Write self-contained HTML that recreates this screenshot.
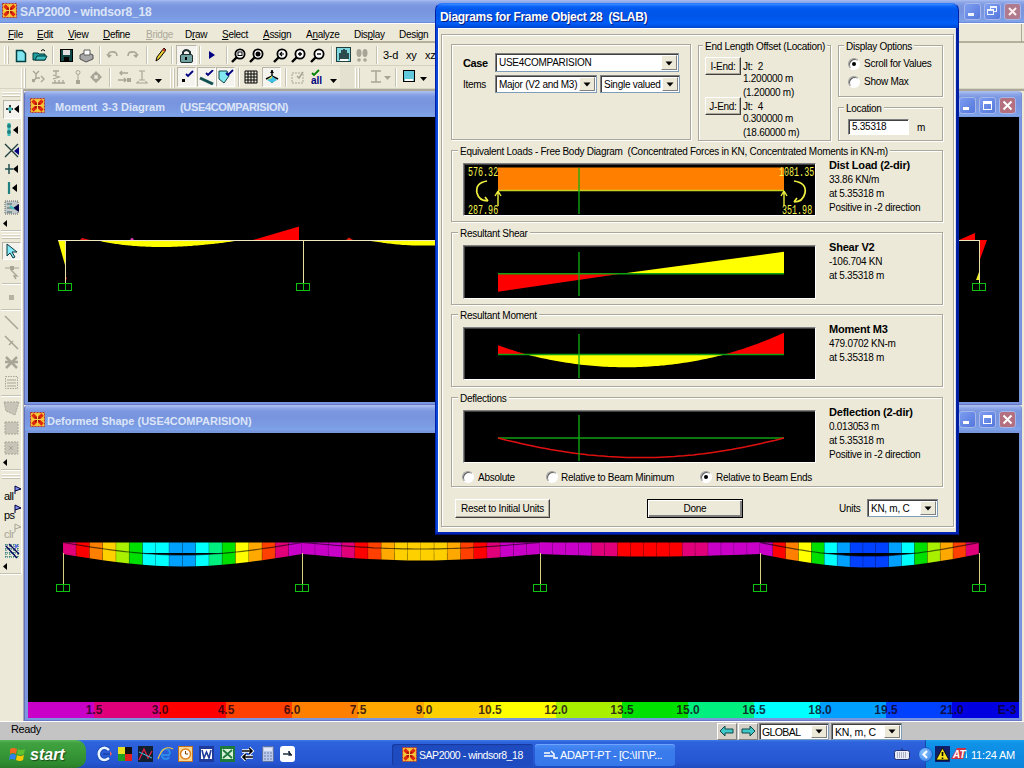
<!DOCTYPE html>
<html><head><meta charset="utf-8"><title>SAP2000</title>
<style>
*{margin:0;padding:0;box-sizing:border-box}
html,body{width:1024px;height:768px;overflow:hidden;background:#ECE9D8;font-family:"Liberation Sans",sans-serif;font-size:11px;color:#000;position:relative}
.a{position:absolute}
.t{position:absolute;white-space:nowrap;line-height:1}
.ttl{background:linear-gradient(#A8BCF0 0,#8EA8E8 2px,#7C98E0 5px,#7894DE 45%,#7B9CE4 80%,#7FA4EA 95%,#7494DC 100%)}
.menu span{position:absolute;white-space:nowrap;line-height:1;font-size:10px;letter-spacing:-0.3px}
.u{text-decoration:underline}
.btn3{position:absolute;border-radius:3px;border:1px solid #A7B7EA}
.grp{border:1px solid #ACA899;box-shadow:inset 1px 1px 0 #fff,1px 1px 0 #fff}
.cmb{background:#fff;border:1px solid #7F9DB9;border-top-color:#808080;border-left-color:#808080;box-shadow:inset 1px 1px 0 #404040}
.cbtn{background:#ECE9D8;border:1px solid #fff;border-right-color:#808080;border-bottom-color:#808080}
.pbtn{background:#ECE9D8;border:1px solid #fff;border-right-color:#404040;border-bottom-color:#404040;box-shadow:inset -1px -1px 0 #ACA899}
.pbtn.def{border:1px solid #000;box-shadow:inset 1px 1px 0 #fff,inset -2px -2px 0 #808080}
.rad{border-radius:50%;background:#fff;border:1px solid #A0A0A0;border-bottom-color:#fff;border-right-color:#fff;box-shadow:inset 1px 1px 0 #606060}
.cnv{background:#000;border:1px solid #808080;border-right-color:#fff;border-bottom-color:#fff;box-shadow:inset 1px 1px 0 #404040;overflow:hidden}
.edit{background:#fff;border:1px solid #808080;border-right-color:#fff;border-bottom-color:#fff;box-shadow:inset 1px 1px 0 #404040}
.dttl{background:linear-gradient(#3D8BFF 0,#1068F8 2px,#0058EE 5px,#0055E8 50%,#005EF8 80%,#0046D0 100%)}
.sbtn{background:#D4D0C8;border:1px solid #fff;border-right-color:#808080;border-bottom-color:#808080}

</style></head><body>
<!-- main title bar -->
<div class="a ttl" style="left:0;top:0;width:1024px;height:23px"></div>
<div class="a" style="left:0;top:22px;width:1024px;height:1px;background:#6C8AD8"></div>
<svg class="a" style="left:2px;top:3px" width="15" height="15"><rect x="0.5" y="0.5" width="14" height="14" fill="#F4C030" stroke="#B03040" stroke-dasharray="2 1"/><path d="M2.5 2.5L12.5 12.5M12.5 2.5L2.5 12.5" stroke="#E02810" stroke-width="3.2"/><path d="M5 5L10 10M10 5L5 10" stroke="#A01808" stroke-width="1.3"/><path d="M2 7.5H13M7.5 2V13" stroke="#F8D050" stroke-width="1"/></svg>
<div class="t" style="left:20px;top:6px;font-size:12px;font-weight:bold;letter-spacing:-0.15px;color:#DCE5F8">SAP2000 - windsor8_18</div>
<div class="btn3" style="left:964px;top:3px;width:17px;height:17px;background:linear-gradient(135deg,#7FA0F0,#5577DD)"></div>
<div class="a" style="left:968px;top:13px;width:6px;height:3px;background:#F0F4FF"></div>
<div class="btn3" style="left:984px;top:3px;width:17px;height:17px;background:linear-gradient(135deg,#7FA0F0,#5577DD)"></div>
<div class="a" style="left:990px;top:6px;width:7px;height:6px;border:1px solid #F0F4FF;border-top-width:2px"></div>
<div class="a" style="left:987px;top:9px;width:7px;height:6px;border:1px solid #F0F4FF;border-top-width:2px;background:#6688E0"></div>
<div class="btn3" style="left:1004px;top:3px;width:17px;height:17px;background:#B07A8E"></div>
<svg class="a" style="left:1004px;top:3px" width="17" height="17"><path d="M5 5L12 12M12 5L5 12" stroke="#FFF0F0" stroke-width="2"/></svg>
<div class="a" style="left:1021px;top:23px;width:3px;height:700px;background:#ECE9D8"></div>
<!-- menu -->
<div class="a menu" style="left:0;top:23px;width:1024px;height:20px;background:#ECE9D8;border-top:1px solid #FFFFFF;border-bottom:2px solid #B4B09C">
<span style="left:8px;top:6px"><u>F</u>ile</span>
<span style="left:37px;top:6px"><u>E</u>dit</span>
<span style="left:68px;top:6px"><u>V</u>iew</span>
<span style="left:103px;top:6px"><u>D</u>efine</span>
<span style="left:146px;top:6px;color:#ACA899"><u>B</u>ridge</span>
<span style="left:185px;top:6px">D<u>r</u>aw</span>
<span style="left:222px;top:6px"><u>S</u>elect</span>
<span style="left:263px;top:6px"><u>A</u>ssign</span>
<span style="left:306px;top:6px">A<u>n</u>alyze</span>
<span style="left:354px;top:6px">Dis<u>p</u>lay</span>
<span style="left:399px;top:6px">Desi<u>g</u>n</span>
</div>
<div class="a" style="left:0;top:43px;width:1024px;height:46px;background:#ECE9D8"></div><div class="a" style="left:0;top:65px;width:440px;height:1px;background:#D6D2C2"></div><div class="a" style="left:1021px;top:24px;width:1px;height:19px;background:#ACA899"></div><div class="a" style="left:0;top:88px;width:1024px;height:1px;background:#D8D4C4"></div><div class="a" style="left:23px;top:89px;width:1001px;height:2px;background:#ACA899"></div><div class="a" style="left:4px;top:46px;width:5px;height:18px;border-left:1px solid #fff;border-right:1px solid #C5C2B2;box-shadow:inset 1px 0 0 #D8D4C4,inset -1px 0 0 #fff"></div><svg class="a" style="left:15px;top:49px" width="12" height="14"><path d="M1.5 1.5H7.5L10.5 4.5V12.5H1.5Z" fill="#7FE6F0" stroke="#004040" stroke-width="1.5"/></svg><svg class="a" style="left:32px;top:48px" width="16" height="14"><path d="M1 5H6L7 6H13V12H1Z" fill="#1E9E9E" stroke="#003838"/><path d="M3 12L5 8H15L13 12Z" fill="#40C0C0" stroke="#003838"/><path d="M9 3Q11 0 13 3" fill="none" stroke="#000"/></svg><div class="a" style="left:52px;top:46px;width:2px;height:18px;border-left:1px solid #C5C2B2;border-right:1px solid #fff"></div><svg class="a" style="left:60px;top:49px" width="13" height="13"><rect x="0.5" y="0.5" width="12" height="12" fill="#104848" stroke="#000"/><rect x="3" y="1" width="7" height="5" fill="#E0E0E0"/><rect x="4" y="8" width="5" height="4" fill="#000"/></svg><svg class="a" style="left:78px;top:48px" width="16" height="15"><path d="M2 7L8 4L15 7L15 11L8 14L2 11Z" fill="#A8A8A8" stroke="#505050"/><path d="M6 2H12V7H6Z" fill="#fff" stroke="#606060"/></svg><div class="a" style="left:99px;top:46px;width:2px;height:18px;border-left:1px solid #C5C2B2;border-right:1px solid #fff"></div><svg class="a" style="left:106px;top:50px" width="13" height="10"><path d="M3 7Q1 3 5 2Q11 1 11 6" fill="none" stroke="#A8A597" stroke-width="1.6"/><path d="M0 4L3 8L6 5Z" fill="#A8A597"/></svg><svg class="a" style="left:126px;top:50px" width="13" height="10"><path d="M10 7Q12 3 8 2Q2 1 2 6" fill="none" stroke="#A8A597" stroke-width="1.6"/><path d="M13 4L10 8L7 5Z" fill="#A8A597"/></svg><div class="a" style="left:146px;top:46px;width:2px;height:18px;border-left:1px solid #C5C2B2;border-right:1px solid #fff"></div><svg class="a" style="left:154px;top:47px" width="12" height="15"><path d="M2 14L3 10L10 1L12 3L5 12Z" fill="#F0D030" stroke="#000"/><path d="M9 2L11 4" stroke="#C03030" stroke-width="2"/></svg><div class="a" style="left:171px;top:46px;width:2px;height:18px;border-left:1px solid #C5C2B2;border-right:1px solid #fff"></div><div class="a" style="left:176px;top:45px;width:21px;height:20px;background:#F4F3EE;border:1px solid #B8B5A6;border-right-color:#fff;border-bottom-color:#fff"></div><svg class="a" style="left:179px;top:48px" width="15" height="15"><path d="M4 7V4Q7 0 11 4V7" fill="none" stroke="#203030" stroke-width="2"/><rect x="1.5" y="6.5" width="12" height="8" rx="1.5" fill="#70A0A0" stroke="#203030"/><rect x="6" y="9" width="2" height="3" fill="#000"/></svg><div class="a" style="left:199px;top:46px;width:2px;height:18px;border-left:1px solid #C5C2B2;border-right:1px solid #fff"></div><svg class="a" style="left:209px;top:51px" width="6" height="8"><path d="M0 0L6 4L0 8Z" fill="#000080"/></svg><div class="a" style="left:226px;top:46px;width:2px;height:18px;border-left:1px solid #C5C2B2;border-right:1px solid #fff"></div><svg class="a" style="left:231px;top:48px" width="15" height="15"><circle cx="9" cy="6" r="4.6" fill="#fff" stroke="#000" stroke-width="1.8"/><path d="M5.5 9.5L1 14" stroke="#000" stroke-width="2.4"/><rect x="7" y="4" width="4" height="3.5" fill="#fff" stroke="#000"/></svg><svg class="a" style="left:249px;top:48px" width="15" height="15"><circle cx="9" cy="6" r="4.6" fill="#fff" stroke="#000" stroke-width="1.8"/><path d="M5.5 9.5L1 14" stroke="#000" stroke-width="2.4"/><circle cx="9" cy="6" r="2.5" fill="#000"/></svg><svg class="a" style="left:273px;top:48px" width="15" height="15"><circle cx="9" cy="6" r="4.6" fill="#fff" stroke="#000" stroke-width="1.8"/><path d="M5.5 9.5L1 14" stroke="#000" stroke-width="2.4"/><path d="M11 6H7M9 4L7 6L9 8" fill="none" stroke="#000" stroke-width="1.2"/></svg><svg class="a" style="left:291px;top:48px" width="15" height="15"><circle cx="9" cy="6" r="4.6" fill="#fff" stroke="#000" stroke-width="1.8"/><path d="M5.5 9.5L1 14" stroke="#000" stroke-width="2.4"/><path d="M7 6H11M9 4V8" stroke="#000" stroke-width="1.4"/></svg><svg class="a" style="left:310px;top:48px" width="15" height="15"><circle cx="9" cy="6" r="4.6" fill="#fff" stroke="#000" stroke-width="1.8"/><path d="M5.5 9.5L1 14" stroke="#000" stroke-width="2.4"/><path d="M7 6H11" stroke="#000" stroke-width="1.4"/></svg><div class="a" style="left:331px;top:46px;width:2px;height:18px;border-left:1px solid #C5C2B2;border-right:1px solid #fff"></div><svg class="a" style="left:336px;top:47px" width="15" height="15"><rect x="0.5" y="0.5" width="14" height="14" fill="#7FD8E0" stroke="#204040"/><path d="M4 13V6M6 12V3M8 12V2M10 12V3M12 12V6" stroke="#000" stroke-width="1.3"/><path d="M4 13H12" stroke="#fff" stroke-width="2"/></svg><svg class="a" style="left:355px;top:48px" width="14" height="14"><ellipse cx="4" cy="5" rx="2.5" ry="4" fill="#A8A597"/><ellipse cx="10" cy="5" rx="2.5" ry="4" fill="#A8A597"/><circle cx="4" cy="12" r="1.8" fill="#A8A597"/><circle cx="10" cy="12" r="1.8" fill="#A8A597"/></svg><div class="a" style="left:376px;top:46px;width:2px;height:18px;border-left:1px solid #C5C2B2;border-right:1px solid #fff"></div><div class="t" style="left:383px;top:50px;font-size:11px;letter-spacing:-0.3px">3-d</div><div class="t" style="left:406px;top:50px;font-size:11px;letter-spacing:-0.3px">xy</div><div class="t" style="left:425px;top:50px;font-size:11px;letter-spacing:-0.3px">xz</div><div class="a" style="left:21px;top:68px;width:5px;height:20px;border-left:1px solid #fff;border-right:1px solid #C5C2B2;box-shadow:inset 1px 0 0 #D8D4C4,inset -1px 0 0 #fff"></div><svg class="a" style="left:32px;top:70px" width="13" height="14"><path d="M1 1L4 4M7 1L4 4V8M4 8L1 12M4 8H8M9 6L12 9L9 12" fill="none" stroke="#A8A597" stroke-width="1.4"/><rect x="0" y="9" width="3" height="3" fill="#A8A597"/></svg><svg class="a" style="left:51px;top:70px" width="15" height="14"><path d="M2 1H8M5 1V5M2 5L8 7L2 9" fill="none" stroke="#A8A597" stroke-width="1.3"/><path d="M1 13H14M4 10V13M8 10V13M12 10V13" stroke="#A8A597" stroke-width="1.3"/></svg><svg class="a" style="left:75px;top:70px" width="6" height="14"><circle cx="3" cy="2.5" r="2" fill="none" stroke="#A8A597"/><path d="M3 5V10" stroke="#A8A597"/><rect x="1" y="10" width="4" height="4" fill="#A8A597"/></svg><svg class="a" style="left:89px;top:70px" width="14" height="14"><path d="M7 1L10 4H4ZM7 13L10 10H4ZM1 7L4 4V10ZM13 7L10 4V10Z" fill="#A8A597"/><rect x="4.5" y="4.5" width="5" height="5" fill="none" stroke="#A8A597" stroke-width="1.5"/></svg><div class="a" style="left:109px;top:68px;width:2px;height:19px;border-left:1px solid #C5C2B2;border-right:1px solid #fff"></div><svg class="a" style="left:116px;top:70px" width="16" height="14"><path d="M4 3H12M6 1L4 3L6 5M2 10H10M8 8L10 10L8 12" fill="none" stroke="#A8A597" stroke-width="1.4"/><rect x="11" y="8" width="4" height="4" fill="#A8A597"/></svg><svg class="a" style="left:135px;top:70px" width="14" height="14"><path d="M7 1V10M4 1H10M4 10H10M1 13H13M3 11V13M11 11V13" fill="none" stroke="#A8A597" stroke-width="1.2"/></svg><svg class="a" style="left:155px;top:79px" width="7" height="4"><path d="M0 0H7L3.5 4Z" fill="#000"/></svg><div class="a" style="left:170px;top:68px;width:5px;height:20px;border-left:1px solid #fff;border-right:1px solid #C5C2B2;box-shadow:inset 1px 0 0 #D8D4C4,inset -1px 0 0 #fff"></div><div class="a" style="left:177px;top:67px;width:19px;height:20px;background:#F4F3EE;border:1px solid #B8B5A6;border-right-color:#fff;border-bottom-color:#fff"></div><div class="a" style="left:197px;top:67px;width:19px;height:20px;background:#F4F3EE;border:1px solid #B8B5A6;border-right-color:#fff;border-bottom-color:#fff"></div><div class="a" style="left:216px;top:67px;width:19px;height:20px;background:#F4F3EE;border:1px solid #B8B5A6;border-right-color:#fff;border-bottom-color:#fff"></div><svg class="a" style="left:180px;top:70px" width="14" height="14"><rect x="2" y="9" width="3" height="3" fill="#000"/><path d="M6 4L8 6L13 1" fill="none" stroke="#000080" stroke-width="1.8"/></svg><svg class="a" style="left:199px;top:70px" width="16" height="15"><path d="M1 8L14 14" stroke="#105050" stroke-width="3"/><path d="M7 3L9 5L14 0" fill="none" stroke="#000080" stroke-width="1.8"/></svg><svg class="a" style="left:218px;top:69px" width="16" height="16"><path d="M1 2H9L11 7L6 14L1 10Z" fill="#80E8F0" stroke="#104848"/><path d="M8 4L10 6L15 1" fill="none" stroke="#000080" stroke-width="1.8"/></svg><div class="a" style="left:238px;top:68px;width:2px;height:19px;border-left:1px solid #C5C2B2;border-right:1px solid #fff"></div><svg class="a" style="left:244px;top:70px" width="14" height="14"><path d="M1 1H13M1 4H13M1 7H13M1 10H13M1 13H13M1 1V13M4 1V13M7 1V13M10 1V13M13 1V13" stroke="#000" stroke-width="1"/></svg><div class="a" style="left:262px;top:67px;width:19px;height:20px;background:#F4F3EE;border:1px solid #B8B5A6;border-right-color:#fff;border-bottom-color:#fff"></div><svg class="a" style="left:264px;top:69px" width="16" height="16"><path d="M8 1V14M2 10L8 7L14 10" fill="none" stroke="#000" stroke-width="1.4"/><path d="M8 7L3 11L8 14L13 11Z" fill="#40C0E0"/><path d="M8 7L3 11L8 9Z" fill="#E0E040"/><path d="M8 1L6 4H10Z" fill="#000"/></svg><div class="a" style="left:285px;top:68px;width:2px;height:19px;border-left:1px solid #C5C2B2;border-right:1px solid #fff"></div><svg class="a" style="left:291px;top:70px" width="14" height="14"><rect x="1" y="3" width="11" height="10" fill="none" stroke="#A8A597" stroke-dasharray="2 1"/><path d="M6 6L8 8L12 2" fill="none" stroke="#A8A597" stroke-width="1.5"/></svg><svg class="a" style="left:310px;top:69px" width="14" height="16"><path d="M2 4L4 6L9 1" fill="none" stroke="#008000" stroke-width="1.8"/><text x="1" y="15" font-family="Liberation Sans" font-size="10" font-weight="bold" fill="#000080">all</text></svg><svg class="a" style="left:330px;top:79px" width="7" height="4"><path d="M0 0H7L3.5 4Z" fill="#000"/></svg><div class="a" style="left:340px;top:66px;width:14px;height:22px;background:#E4E1D0"></div><div class="a" style="left:355px;top:68px;width:5px;height:20px;border-left:1px solid #fff;border-right:1px solid #C5C2B2;box-shadow:inset 1px 0 0 #D8D4C4,inset -1px 0 0 #fff"></div><svg class="a" style="left:370px;top:70px" width="12" height="13"><path d="M1 1H11M1 12H11M6 1V12" stroke="#A8A597" stroke-width="1.5"/></svg><svg class="a" style="left:384px;top:76px" width="7" height="4"><path d="M0 0H7L3.5 4Z" fill="#A8A597"/></svg><div class="a" style="left:395px;top:68px;width:2px;height:19px;border-left:1px solid #C5C2B2;border-right:1px solid #fff"></div><svg class="a" style="left:403px;top:70px" width="12" height="13"><rect x="0.5" y="0.5" width="11" height="11" fill="#60C8D8" stroke="#000"/><rect x="2" y="9" width="8" height="2" fill="#fff"/></svg><svg class="a" style="left:420px;top:77px" width="7" height="4"><path d="M0 0H7L3.5 4Z" fill="#000"/></svg><div class="a" style="left:0;top:89px;width:23px;height:633px;background:#ECE9D8"></div><div class="a" style="left:21px;top:89px;width:1px;height:485px;background:#FFFFFF"></div><div class="a" style="left:23px;top:89px;width:1px;height:633px;background:#A8A8B8"></div><div class="a" style="left:2px;top:92px;width:18px;height:5px;border-top:1px solid #fff;border-bottom:1px solid #C5C2B2;box-shadow:inset 0 1px 0 #D8D4C4,inset 0 -1px 0 #fff"></div><div class="a" style="left:3px;top:100px;width:18px;height:19px;background:#F4F3EE;border:1px solid #B8B5A6;border-right-color:#fff;border-bottom-color:#fff"></div><svg class="a" style="left:5px;top:102px" width="15" height="14"><path d="M1 7H8M5 3V11" stroke="#000" stroke-width="1.5"/><circle cx="5" cy="7" r="2" fill="#40C0C0"/><path d="M14 3V11L9 7Z" fill="#000"/></svg><svg class="a" style="left:5px;top:122px" width="15" height="15"><path d="M4 1V14" stroke="#40C0C0" stroke-width="3"/><circle cx="4" cy="4" r="2" fill="#208080"/><circle cx="4" cy="10" r="2" fill="#208080"/><path d="M13 4V12L8 8Z" fill="#000"/></svg><svg class="a" style="left:4px;top:143px" width="16" height="15"><path d="M1 1L14 14M1 14L14 1" stroke="#204040" stroke-width="1.4"/><path d="M15 4V12L10 8Z" fill="#000080"/></svg><svg class="a" style="left:4px;top:162px" width="16" height="14"><path d="M1 7H9M5 2V12" stroke="#205050" stroke-width="1.5"/><path d="M14 3V11L9 7Z" fill="#000"/></svg><svg class="a" style="left:5px;top:181px" width="14" height="14"><path d="M4 1V13" stroke="#208080" stroke-width="2.2"/><path d="M12 3V11L7 7Z" fill="#000"/></svg><svg class="a" style="left:4px;top:200px" width="16" height="16"><rect x="1" y="1" width="13" height="13" fill="#C0C8C8" stroke="#606060" stroke-dasharray="1 1"/><path d="M3 4H8M3 8H8M3 12H8" stroke="#406060"/><path d="M15 4V12L9 8Z" fill="#000040"/><path d="M6 6L10 9" stroke="#40C0C0" stroke-width="2"/></svg><svg class="a" style="left:3px;top:220px" width="4" height="7"><path d="M4 0V7L0 3.5Z" fill="#000"/></svg><div class="a" style="left:1px;top:230px;width:20px;height:2px;border-top:1px solid #C5C2B2;border-bottom:1px solid #fff"></div><div class="a" style="left:2px;top:234px;width:18px;height:5px;border-top:1px solid #fff;border-bottom:1px solid #C5C2B2;box-shadow:inset 0 1px 0 #D8D4C4,inset 0 -1px 0 #fff"></div><div class="a" style="left:2px;top:242px;width:19px;height:18px;background:#F4F3EE;border:1px solid #B8B5A6;border-right-color:#fff;border-bottom-color:#fff"></div><svg class="a" style="left:6px;top:243px" width="12" height="16"><path d="M1 1L11 9L6 9L9 14L7 15L4 10L1 13Z" fill="#80E8F8" stroke="#103838"/></svg><svg class="a" style="left:4px;top:264px" width="16" height="16"><path d="M1 4H15" stroke="#A8A597"/><rect x="6" y="2" width="4" height="4" fill="#A8A597"/><path d="M7 6L13 12L10 12L12 15" fill="none" stroke="#A8A597" stroke-width="1.4"/></svg><div class="a" style="left:2px;top:283px;width:19px;height:2px;border-top:1px solid #C5C2B2;border-bottom:1px solid #fff"></div><svg class="a" style="left:9px;top:295px" width="5" height="5"><rect x="0" y="0" width="5" height="5" fill="#A8A597" opacity="0.8"/></svg><div class="a" style="left:1px;top:309px;width:20px;height:2px;border-top:1px solid #C5C2B2;border-bottom:1px solid #fff"></div><svg class="a" style="left:4px;top:315px" width="15" height="15"><path d="M1 1L14 14" stroke="#A8A597" stroke-width="1.5"/></svg><svg class="a" style="left:4px;top:335px" width="15" height="15"><path d="M1 1L14 14M5 10L9 6" stroke="#A8A597" stroke-width="1.5"/></svg><svg class="a" style="left:4px;top:355px" width="15" height="15"><path d="M2 2L13 13M2 13L13 2M1 7H14" stroke="#A8A597" stroke-width="2.5"/></svg><svg class="a" style="left:4px;top:375px" width="15" height="15"><rect x="1.5" y="1.5" width="12" height="12" fill="none" stroke="#A8A597" stroke-dasharray="1.5 1"/><path d="M3 5H12M3 8H12M3 11H12" stroke="#A8A597"/></svg><div class="a" style="left:1px;top:395px;width:20px;height:2px;border-top:1px solid #C5C2B2;border-bottom:1px solid #fff"></div><svg class="a" style="left:3px;top:401px" width="17" height="15"><path d="M1 1H16L12 14L3 10Z" fill="#C8C5B8" stroke="#A8A597" stroke-dasharray="2 1"/></svg><svg class="a" style="left:4px;top:421px" width="15" height="14"><rect x="1" y="1" width="13" height="12" fill="#C8C5B8" stroke="#A8A597" stroke-dasharray="2 1"/></svg><svg class="a" style="left:4px;top:441px" width="15" height="14"><rect x="1" y="1" width="13" height="12" fill="#C8C5B8" stroke="#A8A597" stroke-dasharray="2 1"/><path d="M5 5L9 9M9 5L5 9" stroke="#A8A597"/></svg><svg class="a" style="left:3px;top:459px" width="4" height="7"><path d="M4 0V7L0 3.5Z" fill="#000"/></svg><div class="a" style="left:1px;top:469px;width:20px;height:2px;border-top:1px solid #C5C2B2;border-bottom:1px solid #fff"></div><div class="a" style="left:2px;top:474px;width:18px;height:5px;border-top:1px solid #fff;border-bottom:1px solid #C5C2B2;box-shadow:inset 0 1px 0 #D8D4C4,inset 0 -1px 0 #fff"></div><svg class="a" style="left:3px;top:485px" width="19" height="17"><text x="1" y="15" font-family="Liberation Sans" font-size="11" letter-spacing="-0.5" fill="#000">all</text><path d="M12 1V9M12 1L18 4L12 6" fill="#8090F0" stroke="#000040"/></svg><svg class="a" style="left:3px;top:504px" width="19" height="17"><text x="1" y="15" font-family="Liberation Sans" font-size="11" letter-spacing="-0.5" fill="#000">ps</text><path d="M12 1V9M12 1L18 4L12 6" fill="#8090F0" stroke="#000040"/></svg><svg class="a" style="left:3px;top:523px" width="19" height="17"><text x="1" y="15" font-family="Liberation Sans" font-size="11" letter-spacing="-0.5" fill="#A8A597">clr</text><path d="M12 1V9M12 1L18 4L12 6" fill="none" stroke="#A8A597"/></svg><svg class="a" style="left:4px;top:543px" width="17" height="16"><path d="M1 2H15M1 6H15M1 10H15M1 14H15M2 1V15M6 1V15M10 1V15M14 1V15" stroke="#006060" stroke-dasharray="1 1"/><path d="M2 3L13 15M5 1L15 11" stroke="#000060" stroke-width="1.3"/><path d="M11 1V6L15 3Z" fill="#6070E0"/></svg><svg class="a" style="left:3px;top:563px" width="4" height="7"><path d="M4 0V7L0 3.5Z" fill="#000"/></svg><div class="a" style="left:0px;top:573px;width:21px;height:2px;border-top:1px solid #C5C2B2;border-bottom:1px solid #fff"></div><div class="a" style="left:24px;top:91px;width:998px;height:314px;background:#7A96DF;border-radius:4px 4px 0 0;border:1px solid #7A8EDA;border-left-color:#6470B8;border-top-color:#A9BCEE;border-bottom-color:#6A78C8"></div>
<div class="a ttl" style="left:25px;top:92px;width:996px;height:25px;border-radius:3px 3px 0 0"></div>
<svg class="a" style="left:30px;top:98px" width="15" height="15"><rect x="0.5" y="0.5" width="14" height="14" fill="#F4C030" stroke="#B03040" stroke-dasharray="2 1"/><path d="M2.5 2.5L12.5 12.5M12.5 2.5L2.5 12.5" stroke="#E02810" stroke-width="3.2"/><path d="M5 5L10 10M10 5L5 10" stroke="#A01808" stroke-width="1.3"/><path d="M2 7.5H13M7.5 2V13" stroke="#F8D050" stroke-width="1"/></svg>
<div class="t" style="left:55px;top:102px;font-size:11px;font-weight:bold;color:#DCE5F8">Moment</div><div class="t" style="left:102px;top:102px;font-size:11px;font-weight:bold;color:#DCE5F8">3-3 Diagram</div><div class="t" style="left:180px;top:102px;font-size:11px;font-weight:bold;color:#DCE5F8;letter-spacing:-0.35px">(USE4COMPARISION)</div>
<div class="a" style="left:28px;top:117px;width:991px;height:285px;background:#000"><svg width="991" height="285"><polygon points="69.0,123.0 70.5,123.6 71.9,124.0 73.3,124.3 74.8,124.7 76.2,125.0 77.7,125.3 79.2,125.5 80.6,125.8 82.0,126.0 83.5,126.3 85.0,126.5 86.4,126.7 87.8,126.9 89.3,127.1 90.8,127.3 92.2,127.5 93.7,127.7 95.1,127.9 96.5,128.0 98.0,128.2 99.5,128.3 100.9,128.5 102.3,128.6 103.8,128.8 105.2,128.9 106.7,129.0 108.2,129.1 109.6,129.2 111.1,129.3 112.5,129.4 113.9,129.5 115.4,129.6 116.8,129.6 118.3,129.7 119.8,129.7 121.2,129.8 122.7,129.8 124.1,129.9 125.6,129.9 127.0,129.9 128.4,130.0 129.9,130.0 131.3,130.0 132.8,130.0 134.2,130.0 135.7,130.0 137.1,130.0 138.6,130.0 140.1,129.9 141.5,129.9 142.9,129.9 144.4,129.8 145.9,129.8 147.3,129.7 148.8,129.7 150.2,129.6 151.6,129.6 153.1,129.5 154.6,129.4 156.0,129.3 157.4,129.2 158.9,129.2 160.3,129.1 161.8,129.0 163.2,128.9 164.7,128.8 166.2,128.6 167.6,128.5 169.1,128.4 170.5,128.3 171.9,128.2 173.4,128.0 174.8,127.9 176.3,127.8 177.8,127.6 179.2,127.5 180.7,127.3 182.1,127.2 183.6,127.0 185.0,126.9 186.4,126.7 187.9,126.5 189.3,126.4 190.8,126.2 192.2,126.0 193.7,125.9 195.2,125.7 196.6,125.5 198.1,125.3 199.5,125.1 201.0,124.9 202.4,124.7 203.8,124.5 205.3,124.3 206.8,124.1 208.2,123.9 209.7,123.7 211.1,123.5 212.6,123.3 214.0,123.0 214,123 69,123" fill="#FFFF00"/><polygon points="225,123 271,109.5 271,123" fill="#FF0000"/><circle cx="104" cy="122.5" r="1.6" fill="#E040C0"/><polygon points="37,157 39,162 37,163" fill="#E02010"/><polygon points="951,155 948,163 951,163" fill="#F0F020"/><polygon points="318,123 321,120.5 325,123" fill="#E02010"/><polygon points="52,123 54,121 62,123" fill="#E01010"/><polygon points="30,123 37,123 37,148" fill="#FFFF00"/><polygon points="337.0,123.0 338.9,123.3 340.8,123.6 342.6,123.9 344.5,124.2 346.4,124.5 348.2,124.8 350.1,125.1 352.0,125.3 353.9,125.6 355.8,125.9 357.6,126.1 359.5,126.4 361.4,126.6 363.2,126.8 365.1,127.0 367.0,127.2 368.9,127.4 370.8,127.6 372.6,127.8 374.5,127.9 376.4,128.0 378.2,128.1 380.1,128.2 382.0,128.3 383.9,128.4 385.8,128.4 387.6,128.5 389.5,128.5 391.4,128.5 393.2,128.5 395.1,128.5 397.0,128.5 398.9,128.5 400.8,128.5 402.6,128.5 404.5,128.5 406.4,128.5 408.2,128.5 410.1,128.5 412.0,128.5 412,123" fill="#FFFF00"/><polygon points="931,123 947,116 947,123" fill="#FF0000"/><polygon points="951,123 959,123 951,145" fill="#FF0000"/><line x1="30" y1="123.5" x2="951" y2="123.5" stroke="#F0E8C0" stroke-width="1.2"/><line x1="37.5" y1="123" x2="37.5" y2="166" stroke="#E8E0A0" stroke-width="1"/><rect x="30.5" y="166.5" width="13" height="7" fill="none" stroke="#10C010" stroke-width="1"/><line x1="37.5" y1="166" x2="37.5" y2="173" stroke="#10C010" stroke-width="1"/><line x1="275.5" y1="123" x2="275.5" y2="166" stroke="#E8E0A0" stroke-width="1"/><rect x="268.5" y="166.5" width="13" height="7" fill="none" stroke="#10C010" stroke-width="1"/><line x1="275.5" y1="166" x2="275.5" y2="173" stroke="#10C010" stroke-width="1"/><line x1="512.5" y1="123" x2="512.5" y2="166" stroke="#E8E0A0" stroke-width="1"/><rect x="505.5" y="166.5" width="13" height="7" fill="none" stroke="#10C010" stroke-width="1"/><line x1="512.5" y1="166" x2="512.5" y2="173" stroke="#10C010" stroke-width="1"/><line x1="732.5" y1="123" x2="732.5" y2="166" stroke="#E8E0A0" stroke-width="1"/><rect x="725.5" y="166.5" width="13" height="7" fill="none" stroke="#10C010" stroke-width="1"/><line x1="732.5" y1="166" x2="732.5" y2="173" stroke="#10C010" stroke-width="1"/><line x1="951.5" y1="123" x2="951.5" y2="166" stroke="#E8E0A0" stroke-width="1"/><rect x="944.5" y="166.5" width="13" height="7" fill="none" stroke="#10C010" stroke-width="1"/><line x1="951.5" y1="166" x2="951.5" y2="173" stroke="#10C010" stroke-width="1"/></svg></div>
<div class="btn3" style="left:959px;top:97px;width:17px;height:17px;background:linear-gradient(135deg,#7C9CF0,#5478DC)"></div>
<div class="a" style="left:963px;top:107px;width:6px;height:3px;background:#fff"></div>
<div class="btn3" style="left:979px;top:97px;width:17px;height:17px;background:linear-gradient(135deg,#7C9CF0,#5478DC)"></div>
<div class="a" style="left:983px;top:101px;width:9px;height:9px;border:1px solid #fff;border-top-width:3px"></div>
<div class="btn3" style="left:999px;top:97px;width:17px;height:17px;background:#B4707E"></div>
<svg class="a" style="left:999px;top:97px" width="17" height="17"><path d="M4.5 4.5L12.5 12.5M12.5 4.5L4.5 12.5" stroke="#fff" stroke-width="2"/></svg>
<div class="a" style="left:24px;top:405px;width:998px;height:316px;background:#7A96DF;border-radius:4px 4px 0 0;border:1px solid #7A8EDA;border-left-color:#6470B8;border-top-color:#A9BCEE;border-bottom-color:#6A78C8"></div>
<div class="a ttl" style="left:25px;top:406px;width:996px;height:25px;border-radius:3px 3px 0 0"></div>
<svg class="a" style="left:30px;top:412px" width="15" height="15"><rect x="0.5" y="0.5" width="14" height="14" fill="#F4C030" stroke="#B03040" stroke-dasharray="2 1"/><path d="M2.5 2.5L12.5 12.5M12.5 2.5L2.5 12.5" stroke="#E02810" stroke-width="3.2"/><path d="M5 5L10 10M10 5L5 10" stroke="#A01808" stroke-width="1.3"/><path d="M2 7.5H13M7.5 2V13" stroke="#F8D050" stroke-width="1"/></svg>
<div class="t" style="left:47px;top:416px;font-size:11px;font-weight:bold;color:#DCE5F8">Deformed Shape (USE4COMPARISION)</div>
<div class="a" style="left:28px;top:433px;width:991px;height:269px;background:#000"><svg width="991" height="269"><polygon points="35.0,109.5 48.3,109.5 48.3,120.0 35.0,120.0" fill="#E0007A"/><line x1="48.3" y1="109.5" x2="48.3" y2="120.0" stroke="#000" stroke-opacity="0.4" stroke-width="1"/><polygon points="48.3,109.5 61.6,109.5 61.6,120.0 48.3,120.0" fill="#FF0000"/><line x1="61.6" y1="109.5" x2="61.6" y2="120.0" stroke="#000" stroke-opacity="0.4" stroke-width="1"/><polygon points="61.6,109.5 74.8,109.5 74.8,120.0 61.6,120.0" fill="#FF8000"/><line x1="74.8" y1="109.5" x2="74.8" y2="120.0" stroke="#000" stroke-opacity="0.4" stroke-width="1"/><polygon points="74.8,109.5 88.1,109.5 88.1,120.0 74.8,120.0" fill="#FFD000"/><line x1="88.1" y1="109.5" x2="88.1" y2="120.0" stroke="#000" stroke-opacity="0.4" stroke-width="1"/><polygon points="88.1,109.5 101.4,109.5 101.4,120.0 88.1,120.0" fill="#A8F000"/><line x1="101.4" y1="109.5" x2="101.4" y2="120.0" stroke="#000" stroke-opacity="0.4" stroke-width="1"/><polygon points="101.4,109.5 114.7,109.5 114.7,120.0 101.4,120.0" fill="#00E000"/><line x1="114.7" y1="109.5" x2="114.7" y2="120.0" stroke="#000" stroke-opacity="0.4" stroke-width="1"/><polygon points="114.7,109.5 127.9,109.5 127.9,120.0 114.7,120.0" fill="#00FFFF"/><line x1="127.9" y1="109.5" x2="127.9" y2="120.0" stroke="#000" stroke-opacity="0.4" stroke-width="1"/><polygon points="127.9,109.5 141.2,109.5 141.2,120.0 127.9,120.0" fill="#00FFFF"/><line x1="141.2" y1="109.5" x2="141.2" y2="120.0" stroke="#000" stroke-opacity="0.4" stroke-width="1"/><polygon points="141.2,109.5 154.5,109.5 154.5,120.0 141.2,120.0" fill="#00A0FF"/><line x1="154.5" y1="109.5" x2="154.5" y2="120.0" stroke="#000" stroke-opacity="0.4" stroke-width="1"/><polygon points="154.5,109.5 167.8,109.5 167.8,120.0 154.5,120.0" fill="#00A0FF"/><line x1="167.8" y1="109.5" x2="167.8" y2="120.0" stroke="#000" stroke-opacity="0.4" stroke-width="1"/><polygon points="167.8,109.5 181.1,109.5 181.1,120.0 167.8,120.0" fill="#00FFFF"/><line x1="181.1" y1="109.5" x2="181.1" y2="120.0" stroke="#000" stroke-opacity="0.4" stroke-width="1"/><polygon points="181.1,109.5 194.3,109.5 194.3,120.0 181.1,120.0" fill="#00F080"/><line x1="194.3" y1="109.5" x2="194.3" y2="120.0" stroke="#000" stroke-opacity="0.4" stroke-width="1"/><polygon points="194.3,109.5 207.6,109.5 207.6,120.0 194.3,120.0" fill="#00E000"/><line x1="207.6" y1="109.5" x2="207.6" y2="120.0" stroke="#000" stroke-opacity="0.4" stroke-width="1"/><polygon points="207.6,109.5 220.9,109.5 220.9,120.0 207.6,120.0" fill="#FFFF00"/><line x1="220.9" y1="109.5" x2="220.9" y2="120.0" stroke="#000" stroke-opacity="0.4" stroke-width="1"/><polygon points="220.9,109.5 234.2,109.5 234.2,120.0 220.9,120.0" fill="#FFA800"/><line x1="234.2" y1="109.5" x2="234.2" y2="120.0" stroke="#000" stroke-opacity="0.4" stroke-width="1"/><polygon points="234.2,109.5 247.4,109.5 247.4,120.0 234.2,120.0" fill="#FF4000"/><line x1="247.4" y1="109.5" x2="247.4" y2="120.0" stroke="#000" stroke-opacity="0.4" stroke-width="1"/><polygon points="247.4,109.5 260.7,109.5 260.7,120.0 247.4,120.0" fill="#E0007A"/><line x1="260.7" y1="109.5" x2="260.7" y2="120.0" stroke="#000" stroke-opacity="0.4" stroke-width="1"/><polygon points="260.7,109.5 274.0,109.5 274.0,120.0 260.7,120.0" fill="#C800C8"/><line x1="274.0" y1="109.5" x2="274.0" y2="120.0" stroke="#000" stroke-opacity="0.4" stroke-width="1"/><polygon points="35.0,109.5 48.3,111.7 48.3,123.2 35.0,121.0" fill="#E0007A"/><line x1="48.3" y1="111.7" x2="48.3" y2="123.2" stroke="#000" stroke-opacity="0.4" stroke-width="1"/><polygon points="48.3,111.7 61.6,113.8 61.6,125.3 48.3,123.2" fill="#FF0000"/><line x1="61.6" y1="113.8" x2="61.6" y2="125.3" stroke="#000" stroke-opacity="0.4" stroke-width="1"/><polygon points="61.6,113.8 74.8,115.8 74.8,127.2 61.6,125.3" fill="#FF8000"/><line x1="74.8" y1="115.8" x2="74.8" y2="127.2" stroke="#000" stroke-opacity="0.4" stroke-width="1"/><polygon points="74.8,115.8 88.1,117.5 88.1,129.0 74.8,127.2" fill="#FFD000"/><line x1="88.1" y1="117.5" x2="88.1" y2="129.0" stroke="#000" stroke-opacity="0.4" stroke-width="1"/><polygon points="88.1,117.5 101.4,119.1 101.4,130.6 88.1,129.0" fill="#A8F000"/><line x1="101.4" y1="119.1" x2="101.4" y2="130.6" stroke="#000" stroke-opacity="0.4" stroke-width="1"/><polygon points="101.4,119.1 114.7,120.3 114.7,131.8 101.4,130.6" fill="#00E000"/><line x1="114.7" y1="120.3" x2="114.7" y2="131.8" stroke="#000" stroke-opacity="0.4" stroke-width="1"/><polygon points="114.7,120.3 127.9,121.2 127.9,132.7 114.7,131.8" fill="#00FFFF"/><line x1="127.9" y1="121.2" x2="127.9" y2="132.7" stroke="#000" stroke-opacity="0.4" stroke-width="1"/><polygon points="127.9,121.2 141.2,121.8 141.2,133.3 127.9,132.7" fill="#00FFFF"/><line x1="141.2" y1="121.8" x2="141.2" y2="133.3" stroke="#000" stroke-opacity="0.4" stroke-width="1"/><polygon points="141.2,121.8 154.5,122.0 154.5,133.5 141.2,133.3" fill="#00A0FF"/><line x1="154.5" y1="122.0" x2="154.5" y2="133.5" stroke="#000" stroke-opacity="0.4" stroke-width="1"/><polygon points="154.5,122.0 167.8,121.8 167.8,133.3 154.5,133.5" fill="#00A0FF"/><line x1="167.8" y1="121.8" x2="167.8" y2="133.3" stroke="#000" stroke-opacity="0.4" stroke-width="1"/><polygon points="167.8,121.8 181.1,121.2 181.1,132.7 167.8,133.3" fill="#00FFFF"/><line x1="181.1" y1="121.2" x2="181.1" y2="132.7" stroke="#000" stroke-opacity="0.4" stroke-width="1"/><polygon points="181.1,121.2 194.3,120.3 194.3,131.8 181.1,132.7" fill="#00F080"/><line x1="194.3" y1="120.3" x2="194.3" y2="131.8" stroke="#000" stroke-opacity="0.4" stroke-width="1"/><polygon points="194.3,120.3 207.6,119.1 207.6,130.6 194.3,131.8" fill="#00E000"/><line x1="207.6" y1="119.1" x2="207.6" y2="130.6" stroke="#000" stroke-opacity="0.4" stroke-width="1"/><polygon points="207.6,119.1 220.9,117.5 220.9,129.0 207.6,130.6" fill="#FFFF00"/><line x1="220.9" y1="117.5" x2="220.9" y2="129.0" stroke="#000" stroke-opacity="0.4" stroke-width="1"/><polygon points="220.9,117.5 234.2,115.8 234.2,127.2 220.9,129.0" fill="#FFA800"/><line x1="234.2" y1="115.8" x2="234.2" y2="127.2" stroke="#000" stroke-opacity="0.4" stroke-width="1"/><polygon points="234.2,115.8 247.4,113.8 247.4,125.3 234.2,127.2" fill="#FF4000"/><line x1="247.4" y1="113.8" x2="247.4" y2="125.3" stroke="#000" stroke-opacity="0.4" stroke-width="1"/><polygon points="247.4,113.8 260.7,111.7 260.7,123.2 247.4,125.3" fill="#E0007A"/><line x1="260.7" y1="111.7" x2="260.7" y2="123.2" stroke="#000" stroke-opacity="0.4" stroke-width="1"/><polygon points="260.7,111.7 274.0,109.5 274.0,121.0 260.7,123.2" fill="#C800C8"/><line x1="274.0" y1="109.5" x2="274.0" y2="121.0" stroke="#000" stroke-opacity="0.4" stroke-width="1"/><polyline points="35.0,109.5 41.0,110.5 47.0,111.5 52.9,112.4 58.9,113.4 64.9,114.3 70.8,115.2 76.8,116.0 82.8,116.8 88.8,117.6 94.8,118.3 100.7,119.0 106.7,119.6 112.7,120.2 118.6,120.6 124.6,121.0 130.6,121.4 136.6,121.7 142.6,121.8 148.5,122.0 154.5,122.0 160.5,122.0 166.5,121.8 172.4,121.7 178.4,121.4 184.4,121.0 190.3,120.6 196.3,120.2 202.3,119.6 208.3,119.0 214.2,118.3 220.2,117.6 226.2,116.8 232.2,116.0 238.1,115.2 244.1,114.3 250.1,113.4 256.1,112.4 262.0,111.5 268.0,110.5 274.0,109.5" fill="none" stroke="#000" stroke-opacity="0.6" stroke-width="1.2"/><polygon points="274.0,109.5 287.2,109.5 287.2,120.0 274.0,120.0" fill="#C800C8"/><line x1="287.2" y1="109.5" x2="287.2" y2="120.0" stroke="#000" stroke-opacity="0.4" stroke-width="1"/><polygon points="287.2,109.5 300.4,109.5 300.4,120.0 287.2,120.0" fill="#C800C8"/><line x1="300.4" y1="109.5" x2="300.4" y2="120.0" stroke="#000" stroke-opacity="0.4" stroke-width="1"/><polygon points="300.4,109.5 313.7,109.5 313.7,120.0 300.4,120.0" fill="#C800C8"/><line x1="313.7" y1="109.5" x2="313.7" y2="120.0" stroke="#000" stroke-opacity="0.4" stroke-width="1"/><polygon points="313.7,109.5 326.9,109.5 326.9,120.0 313.7,120.0" fill="#E0007A"/><line x1="326.9" y1="109.5" x2="326.9" y2="120.0" stroke="#000" stroke-opacity="0.4" stroke-width="1"/><polygon points="326.9,109.5 340.1,109.5 340.1,120.0 326.9,120.0" fill="#FF0000"/><line x1="340.1" y1="109.5" x2="340.1" y2="120.0" stroke="#000" stroke-opacity="0.4" stroke-width="1"/><polygon points="340.1,109.5 353.3,109.5 353.3,120.0 340.1,120.0" fill="#FF4000"/><line x1="353.3" y1="109.5" x2="353.3" y2="120.0" stroke="#000" stroke-opacity="0.4" stroke-width="1"/><polygon points="353.3,109.5 366.6,109.5 366.6,120.0 353.3,120.0" fill="#FFA800"/><line x1="366.6" y1="109.5" x2="366.6" y2="120.0" stroke="#000" stroke-opacity="0.4" stroke-width="1"/><polygon points="366.6,109.5 379.8,109.5 379.8,120.0 366.6,120.0" fill="#FFD000"/><line x1="379.8" y1="109.5" x2="379.8" y2="120.0" stroke="#000" stroke-opacity="0.4" stroke-width="1"/><polygon points="379.8,109.5 393.0,109.5 393.0,120.0 379.8,120.0" fill="#FFD000"/><line x1="393.0" y1="109.5" x2="393.0" y2="120.0" stroke="#000" stroke-opacity="0.4" stroke-width="1"/><polygon points="393.0,109.5 406.2,109.5 406.2,120.0 393.0,120.0" fill="#FFD000"/><line x1="406.2" y1="109.5" x2="406.2" y2="120.0" stroke="#000" stroke-opacity="0.4" stroke-width="1"/><polygon points="406.2,109.5 419.4,109.5 419.4,120.0 406.2,120.0" fill="#FFD000"/><line x1="419.4" y1="109.5" x2="419.4" y2="120.0" stroke="#000" stroke-opacity="0.4" stroke-width="1"/><polygon points="419.4,109.5 432.7,109.5 432.7,120.0 419.4,120.0" fill="#FFA800"/><line x1="432.7" y1="109.5" x2="432.7" y2="120.0" stroke="#000" stroke-opacity="0.4" stroke-width="1"/><polygon points="432.7,109.5 445.9,109.5 445.9,120.0 432.7,120.0" fill="#FF4000"/><line x1="445.9" y1="109.5" x2="445.9" y2="120.0" stroke="#000" stroke-opacity="0.4" stroke-width="1"/><polygon points="445.9,109.5 459.1,109.5 459.1,120.0 445.9,120.0" fill="#FF0000"/><line x1="459.1" y1="109.5" x2="459.1" y2="120.0" stroke="#000" stroke-opacity="0.4" stroke-width="1"/><polygon points="459.1,109.5 472.3,109.5 472.3,120.0 459.1,120.0" fill="#E0007A"/><line x1="472.3" y1="109.5" x2="472.3" y2="120.0" stroke="#000" stroke-opacity="0.4" stroke-width="1"/><polygon points="472.3,109.5 485.6,109.5 485.6,120.0 472.3,120.0" fill="#C800C8"/><line x1="485.6" y1="109.5" x2="485.6" y2="120.0" stroke="#000" stroke-opacity="0.4" stroke-width="1"/><polygon points="485.6,109.5 498.8,109.5 498.8,120.0 485.6,120.0" fill="#C800C8"/><line x1="498.8" y1="109.5" x2="498.8" y2="120.0" stroke="#000" stroke-opacity="0.4" stroke-width="1"/><polygon points="498.8,109.5 512.0,109.5 512.0,120.0 498.8,120.0" fill="#C800C8"/><line x1="512.0" y1="109.5" x2="512.0" y2="120.0" stroke="#000" stroke-opacity="0.4" stroke-width="1"/><polygon points="274.0,109.5 287.2,110.6 287.2,122.1 274.0,121.0" fill="#C800C8"/><line x1="287.2" y1="110.6" x2="287.2" y2="122.1" stroke="#000" stroke-opacity="0.4" stroke-width="1"/><polygon points="287.2,110.6 300.4,111.7 300.4,123.2 287.2,122.1" fill="#C800C8"/><line x1="300.4" y1="111.7" x2="300.4" y2="123.2" stroke="#000" stroke-opacity="0.4" stroke-width="1"/><polygon points="300.4,111.7 313.7,112.8 313.7,124.2 300.4,123.2" fill="#C800C8"/><line x1="313.7" y1="112.8" x2="313.7" y2="124.2" stroke="#000" stroke-opacity="0.4" stroke-width="1"/><polygon points="313.7,112.8 326.9,113.7 326.9,125.2 313.7,124.2" fill="#E0007A"/><line x1="326.9" y1="113.7" x2="326.9" y2="125.2" stroke="#000" stroke-opacity="0.4" stroke-width="1"/><polygon points="326.9,113.7 340.1,114.5 340.1,126.0 326.9,125.2" fill="#FF0000"/><line x1="340.1" y1="114.5" x2="340.1" y2="126.0" stroke="#000" stroke-opacity="0.4" stroke-width="1"/><polygon points="340.1,114.5 353.3,115.1 353.3,126.6 340.1,126.0" fill="#FF4000"/><line x1="353.3" y1="115.1" x2="353.3" y2="126.6" stroke="#000" stroke-opacity="0.4" stroke-width="1"/><polygon points="353.3,115.1 366.6,115.6 366.6,127.1 353.3,126.6" fill="#FFA800"/><line x1="366.6" y1="115.6" x2="366.6" y2="127.1" stroke="#000" stroke-opacity="0.4" stroke-width="1"/><polygon points="366.6,115.6 379.8,115.9 379.8,127.4 366.6,127.1" fill="#FFD000"/><line x1="379.8" y1="115.9" x2="379.8" y2="127.4" stroke="#000" stroke-opacity="0.4" stroke-width="1"/><polygon points="379.8,115.9 393.0,116.0 393.0,127.5 379.8,127.4" fill="#FFD000"/><line x1="393.0" y1="116.0" x2="393.0" y2="127.5" stroke="#000" stroke-opacity="0.4" stroke-width="1"/><polygon points="393.0,116.0 406.2,115.9 406.2,127.4 393.0,127.5" fill="#FFD000"/><line x1="406.2" y1="115.9" x2="406.2" y2="127.4" stroke="#000" stroke-opacity="0.4" stroke-width="1"/><polygon points="406.2,115.9 419.4,115.6 419.4,127.1 406.2,127.4" fill="#FFD000"/><line x1="419.4" y1="115.6" x2="419.4" y2="127.1" stroke="#000" stroke-opacity="0.4" stroke-width="1"/><polygon points="419.4,115.6 432.7,115.1 432.7,126.6 419.4,127.1" fill="#FFA800"/><line x1="432.7" y1="115.1" x2="432.7" y2="126.6" stroke="#000" stroke-opacity="0.4" stroke-width="1"/><polygon points="432.7,115.1 445.9,114.5 445.9,126.0 432.7,126.6" fill="#FF4000"/><line x1="445.9" y1="114.5" x2="445.9" y2="126.0" stroke="#000" stroke-opacity="0.4" stroke-width="1"/><polygon points="445.9,114.5 459.1,113.7 459.1,125.2 445.9,126.0" fill="#FF0000"/><line x1="459.1" y1="113.7" x2="459.1" y2="125.2" stroke="#000" stroke-opacity="0.4" stroke-width="1"/><polygon points="459.1,113.7 472.3,112.8 472.3,124.2 459.1,125.2" fill="#E0007A"/><line x1="472.3" y1="112.8" x2="472.3" y2="124.2" stroke="#000" stroke-opacity="0.4" stroke-width="1"/><polygon points="472.3,112.8 485.6,111.7 485.6,123.2 472.3,124.2" fill="#C800C8"/><line x1="485.6" y1="111.7" x2="485.6" y2="123.2" stroke="#000" stroke-opacity="0.4" stroke-width="1"/><polygon points="485.6,111.7 498.8,110.6 498.8,122.1 485.6,123.2" fill="#C800C8"/><line x1="498.8" y1="110.6" x2="498.8" y2="122.1" stroke="#000" stroke-opacity="0.4" stroke-width="1"/><polygon points="498.8,110.6 512.0,109.5 512.0,121.0 498.8,122.1" fill="#C800C8"/><line x1="512.0" y1="109.5" x2="512.0" y2="121.0" stroke="#000" stroke-opacity="0.4" stroke-width="1"/><polyline points="274.0,109.5 279.9,110.0 285.9,110.5 291.9,111.0 297.8,111.5 303.8,112.0 309.7,112.5 315.6,112.9 321.6,113.3 327.6,113.7 333.5,114.1 339.4,114.4 345.4,114.8 351.4,115.0 357.3,115.3 363.2,115.5 369.2,115.7 375.1,115.8 381.1,115.9 387.1,116.0 393.0,116.0 398.9,116.0 404.9,115.9 410.9,115.8 416.8,115.7 422.8,115.5 428.7,115.3 434.6,115.0 440.6,114.8 446.5,114.4 452.5,114.1 458.5,113.7 464.4,113.3 470.4,112.9 476.3,112.5 482.2,112.0 488.2,111.5 494.1,111.0 500.1,110.5 506.0,110.0 512.0,109.5" fill="none" stroke="#000" stroke-opacity="0.6" stroke-width="1.2"/><polygon points="512.0,109.5 524.9,109.5 524.9,120.0 512.0,120.0" fill="#C800C8"/><line x1="524.9" y1="109.5" x2="524.9" y2="120.0" stroke="#000" stroke-opacity="0.4" stroke-width="1"/><polygon points="524.9,109.5 537.9,109.5 537.9,120.0 524.9,120.0" fill="#C800C8"/><line x1="537.9" y1="109.5" x2="537.9" y2="120.0" stroke="#000" stroke-opacity="0.4" stroke-width="1"/><polygon points="537.9,109.5 550.8,109.5 550.8,120.0 537.9,120.0" fill="#C800C8"/><line x1="550.8" y1="109.5" x2="550.8" y2="120.0" stroke="#000" stroke-opacity="0.4" stroke-width="1"/><polygon points="550.8,109.5 563.8,109.5 563.8,120.0 550.8,120.0" fill="#C800C8"/><line x1="563.8" y1="109.5" x2="563.8" y2="120.0" stroke="#000" stroke-opacity="0.4" stroke-width="1"/><polygon points="563.8,109.5 576.7,109.5 576.7,120.0 563.8,120.0" fill="#E0007A"/><line x1="576.7" y1="109.5" x2="576.7" y2="120.0" stroke="#000" stroke-opacity="0.4" stroke-width="1"/><polygon points="576.7,109.5 589.6,109.5 589.6,120.0 576.7,120.0" fill="#E0007A"/><line x1="589.6" y1="109.5" x2="589.6" y2="120.0" stroke="#000" stroke-opacity="0.4" stroke-width="1"/><polygon points="589.6,109.5 602.6,109.5 602.6,120.0 589.6,120.0" fill="#FF0000"/><line x1="602.6" y1="109.5" x2="602.6" y2="120.0" stroke="#000" stroke-opacity="0.4" stroke-width="1"/><polygon points="602.6,109.5 615.5,109.5 615.5,120.0 602.6,120.0" fill="#FF0000"/><line x1="615.5" y1="109.5" x2="615.5" y2="120.0" stroke="#000" stroke-opacity="0.4" stroke-width="1"/><polygon points="615.5,109.5 628.5,109.5 628.5,120.0 615.5,120.0" fill="#FF0000"/><line x1="628.5" y1="109.5" x2="628.5" y2="120.0" stroke="#000" stroke-opacity="0.4" stroke-width="1"/><polygon points="628.5,109.5 641.4,109.5 641.4,120.0 628.5,120.0" fill="#FF0000"/><line x1="641.4" y1="109.5" x2="641.4" y2="120.0" stroke="#000" stroke-opacity="0.4" stroke-width="1"/><polygon points="641.4,109.5 654.4,109.5 654.4,120.0 641.4,120.0" fill="#FF0000"/><line x1="654.4" y1="109.5" x2="654.4" y2="120.0" stroke="#000" stroke-opacity="0.4" stroke-width="1"/><polygon points="654.4,109.5 667.3,109.5 667.3,120.0 654.4,120.0" fill="#E0007A"/><line x1="667.3" y1="109.5" x2="667.3" y2="120.0" stroke="#000" stroke-opacity="0.4" stroke-width="1"/><polygon points="667.3,109.5 680.2,109.5 680.2,120.0 667.3,120.0" fill="#E0007A"/><line x1="680.2" y1="109.5" x2="680.2" y2="120.0" stroke="#000" stroke-opacity="0.4" stroke-width="1"/><polygon points="680.2,109.5 693.2,109.5 693.2,120.0 680.2,120.0" fill="#C800C8"/><line x1="693.2" y1="109.5" x2="693.2" y2="120.0" stroke="#000" stroke-opacity="0.4" stroke-width="1"/><polygon points="693.2,109.5 706.1,109.5 706.1,120.0 693.2,120.0" fill="#C800C8"/><line x1="706.1" y1="109.5" x2="706.1" y2="120.0" stroke="#000" stroke-opacity="0.4" stroke-width="1"/><polygon points="706.1,109.5 719.1,109.5 719.1,120.0 706.1,120.0" fill="#C800C8"/><line x1="719.1" y1="109.5" x2="719.1" y2="120.0" stroke="#000" stroke-opacity="0.4" stroke-width="1"/><polygon points="719.1,109.5 732.0,109.5 732.0,120.0 719.1,120.0" fill="#C800C8"/><line x1="732.0" y1="109.5" x2="732.0" y2="120.0" stroke="#000" stroke-opacity="0.4" stroke-width="1"/><polygon points="512.0,109.5 524.9,110.0 524.9,121.5 512.0,121.0" fill="#C800C8"/><line x1="524.9" y1="110.0" x2="524.9" y2="121.5" stroke="#000" stroke-opacity="0.4" stroke-width="1"/><polygon points="524.9,110.0 537.9,110.4 537.9,121.9 524.9,121.5" fill="#C800C8"/><line x1="537.9" y1="110.4" x2="537.9" y2="121.9" stroke="#000" stroke-opacity="0.4" stroke-width="1"/><polygon points="537.9,110.4 550.8,110.8 550.8,122.3 537.9,121.9" fill="#C800C8"/><line x1="550.8" y1="110.8" x2="550.8" y2="122.3" stroke="#000" stroke-opacity="0.4" stroke-width="1"/><polygon points="550.8,110.8 563.8,111.2 563.8,122.7 550.8,122.3" fill="#C800C8"/><line x1="563.8" y1="111.2" x2="563.8" y2="122.7" stroke="#000" stroke-opacity="0.4" stroke-width="1"/><polygon points="563.8,111.2 576.7,111.5 576.7,123.0 563.8,122.7" fill="#E0007A"/><line x1="576.7" y1="111.5" x2="576.7" y2="123.0" stroke="#000" stroke-opacity="0.4" stroke-width="1"/><polygon points="576.7,111.5 589.6,111.7 589.6,123.2 576.7,123.0" fill="#E0007A"/><line x1="589.6" y1="111.7" x2="589.6" y2="123.2" stroke="#000" stroke-opacity="0.4" stroke-width="1"/><polygon points="589.6,111.7 602.6,111.9 602.6,123.4 589.6,123.2" fill="#FF0000"/><line x1="602.6" y1="111.9" x2="602.6" y2="123.4" stroke="#000" stroke-opacity="0.4" stroke-width="1"/><polygon points="602.6,111.9 615.5,112.0 615.5,123.5 602.6,123.4" fill="#FF0000"/><line x1="615.5" y1="112.0" x2="615.5" y2="123.5" stroke="#000" stroke-opacity="0.4" stroke-width="1"/><polygon points="615.5,112.0 628.5,112.0 628.5,123.5 615.5,123.5" fill="#FF0000"/><line x1="628.5" y1="112.0" x2="628.5" y2="123.5" stroke="#000" stroke-opacity="0.4" stroke-width="1"/><polygon points="628.5,112.0 641.4,111.9 641.4,123.4 628.5,123.5" fill="#FF0000"/><line x1="641.4" y1="111.9" x2="641.4" y2="123.4" stroke="#000" stroke-opacity="0.4" stroke-width="1"/><polygon points="641.4,111.9 654.4,111.7 654.4,123.2 641.4,123.4" fill="#FF0000"/><line x1="654.4" y1="111.7" x2="654.4" y2="123.2" stroke="#000" stroke-opacity="0.4" stroke-width="1"/><polygon points="654.4,111.7 667.3,111.5 667.3,123.0 654.4,123.2" fill="#E0007A"/><line x1="667.3" y1="111.5" x2="667.3" y2="123.0" stroke="#000" stroke-opacity="0.4" stroke-width="1"/><polygon points="667.3,111.5 680.2,111.2 680.2,122.7 667.3,123.0" fill="#E0007A"/><line x1="680.2" y1="111.2" x2="680.2" y2="122.7" stroke="#000" stroke-opacity="0.4" stroke-width="1"/><polygon points="680.2,111.2 693.2,110.8 693.2,122.3 680.2,122.7" fill="#C800C8"/><line x1="693.2" y1="110.8" x2="693.2" y2="122.3" stroke="#000" stroke-opacity="0.4" stroke-width="1"/><polygon points="693.2,110.8 706.1,110.4 706.1,121.9 693.2,122.3" fill="#C800C8"/><line x1="706.1" y1="110.4" x2="706.1" y2="121.9" stroke="#000" stroke-opacity="0.4" stroke-width="1"/><polygon points="706.1,110.4 719.1,110.0 719.1,121.5 706.1,121.9" fill="#C800C8"/><line x1="719.1" y1="110.0" x2="719.1" y2="121.5" stroke="#000" stroke-opacity="0.4" stroke-width="1"/><polygon points="719.1,110.0 732.0,109.5 732.0,121.0 719.1,121.5" fill="#C800C8"/><line x1="732.0" y1="109.5" x2="732.0" y2="121.0" stroke="#000" stroke-opacity="0.4" stroke-width="1"/><polygon points="732.0,109.5 744.9,109.5 744.9,120.0 732.0,120.0" fill="#C800C8"/><line x1="744.9" y1="109.5" x2="744.9" y2="120.0" stroke="#000" stroke-opacity="0.4" stroke-width="1"/><polygon points="744.9,109.5 757.8,109.5 757.8,120.0 744.9,120.0" fill="#FF0000"/><line x1="757.8" y1="109.5" x2="757.8" y2="120.0" stroke="#000" stroke-opacity="0.4" stroke-width="1"/><polygon points="757.8,109.5 770.6,109.5 770.6,120.0 757.8,120.0" fill="#FF8000"/><line x1="770.6" y1="109.5" x2="770.6" y2="120.0" stroke="#000" stroke-opacity="0.4" stroke-width="1"/><polygon points="770.6,109.5 783.5,109.5 783.5,120.0 770.6,120.0" fill="#FFFF00"/><line x1="783.5" y1="109.5" x2="783.5" y2="120.0" stroke="#000" stroke-opacity="0.4" stroke-width="1"/><polygon points="783.5,109.5 796.4,109.5 796.4,120.0 783.5,120.0" fill="#00E000"/><line x1="796.4" y1="109.5" x2="796.4" y2="120.0" stroke="#000" stroke-opacity="0.4" stroke-width="1"/><polygon points="796.4,109.5 809.3,109.5 809.3,120.0 796.4,120.0" fill="#00FFFF"/><line x1="809.3" y1="109.5" x2="809.3" y2="120.0" stroke="#000" stroke-opacity="0.4" stroke-width="1"/><polygon points="809.3,109.5 822.2,109.5 822.2,120.0 809.3,120.0" fill="#00A0FF"/><line x1="822.2" y1="109.5" x2="822.2" y2="120.0" stroke="#000" stroke-opacity="0.4" stroke-width="1"/><polygon points="822.2,109.5 835.1,109.5 835.1,120.0 822.2,120.0" fill="#0040FF"/><line x1="835.1" y1="109.5" x2="835.1" y2="120.0" stroke="#000" stroke-opacity="0.4" stroke-width="1"/><polygon points="835.1,109.5 847.9,109.5 847.9,120.0 835.1,120.0" fill="#0040FF"/><line x1="847.9" y1="109.5" x2="847.9" y2="120.0" stroke="#000" stroke-opacity="0.4" stroke-width="1"/><polygon points="847.9,109.5 860.8,109.5 860.8,120.0 847.9,120.0" fill="#0040FF"/><line x1="860.8" y1="109.5" x2="860.8" y2="120.0" stroke="#000" stroke-opacity="0.4" stroke-width="1"/><polygon points="860.8,109.5 873.7,109.5 873.7,120.0 860.8,120.0" fill="#00A0FF"/><line x1="873.7" y1="109.5" x2="873.7" y2="120.0" stroke="#000" stroke-opacity="0.4" stroke-width="1"/><polygon points="873.7,109.5 886.6,109.5 886.6,120.0 873.7,120.0" fill="#00FFFF"/><line x1="886.6" y1="109.5" x2="886.6" y2="120.0" stroke="#000" stroke-opacity="0.4" stroke-width="1"/><polygon points="886.6,109.5 899.5,109.5 899.5,120.0 886.6,120.0" fill="#00E000"/><line x1="899.5" y1="109.5" x2="899.5" y2="120.0" stroke="#000" stroke-opacity="0.4" stroke-width="1"/><polygon points="899.5,109.5 912.4,109.5 912.4,120.0 899.5,120.0" fill="#A8F000"/><line x1="912.4" y1="109.5" x2="912.4" y2="120.0" stroke="#000" stroke-opacity="0.4" stroke-width="1"/><polygon points="912.4,109.5 925.2,109.5 925.2,120.0 912.4,120.0" fill="#FFA800"/><line x1="925.2" y1="109.5" x2="925.2" y2="120.0" stroke="#000" stroke-opacity="0.4" stroke-width="1"/><polygon points="925.2,109.5 938.1,109.5 938.1,120.0 925.2,120.0" fill="#FF4000"/><line x1="938.1" y1="109.5" x2="938.1" y2="120.0" stroke="#000" stroke-opacity="0.4" stroke-width="1"/><polygon points="938.1,109.5 951.0,109.5 951.0,120.0 938.1,120.0" fill="#E0007A"/><line x1="951.0" y1="109.5" x2="951.0" y2="120.0" stroke="#000" stroke-opacity="0.4" stroke-width="1"/><polygon points="732.0,109.5 744.9,112.0 744.9,123.5 732.0,121.0" fill="#C800C8"/><line x1="744.9" y1="112.0" x2="744.9" y2="123.5" stroke="#000" stroke-opacity="0.4" stroke-width="1"/><polygon points="744.9,112.0 757.8,114.4 757.8,125.9 744.9,123.5" fill="#FF0000"/><line x1="757.8" y1="114.4" x2="757.8" y2="125.9" stroke="#000" stroke-opacity="0.4" stroke-width="1"/><polygon points="757.8,114.4 770.6,116.6 770.6,128.1 757.8,125.9" fill="#FF8000"/><line x1="770.6" y1="116.6" x2="770.6" y2="128.1" stroke="#000" stroke-opacity="0.4" stroke-width="1"/><polygon points="770.6,116.6 783.5,118.6 783.5,130.1 770.6,128.1" fill="#FFFF00"/><line x1="783.5" y1="118.6" x2="783.5" y2="130.1" stroke="#000" stroke-opacity="0.4" stroke-width="1"/><polygon points="783.5,118.6 796.4,120.3 796.4,131.8 783.5,130.1" fill="#00E000"/><line x1="796.4" y1="120.3" x2="796.4" y2="131.8" stroke="#000" stroke-opacity="0.4" stroke-width="1"/><polygon points="796.4,120.3 809.3,121.6 809.3,133.1 796.4,131.8" fill="#00FFFF"/><line x1="809.3" y1="121.6" x2="809.3" y2="133.1" stroke="#000" stroke-opacity="0.4" stroke-width="1"/><polygon points="809.3,121.6 822.2,122.5 822.2,134.0 809.3,133.1" fill="#00A0FF"/><line x1="822.2" y1="122.5" x2="822.2" y2="134.0" stroke="#000" stroke-opacity="0.4" stroke-width="1"/><polygon points="822.2,122.5 835.1,122.9 835.1,134.4 822.2,134.0" fill="#0040FF"/><line x1="835.1" y1="122.9" x2="835.1" y2="134.4" stroke="#000" stroke-opacity="0.4" stroke-width="1"/><polygon points="835.1,122.9 847.9,122.9 847.9,134.4 835.1,134.4" fill="#0040FF"/><line x1="847.9" y1="122.9" x2="847.9" y2="134.4" stroke="#000" stroke-opacity="0.4" stroke-width="1"/><polygon points="847.9,122.9 860.8,122.5 860.8,134.0 847.9,134.4" fill="#0040FF"/><line x1="860.8" y1="122.5" x2="860.8" y2="134.0" stroke="#000" stroke-opacity="0.4" stroke-width="1"/><polygon points="860.8,122.5 873.7,121.6 873.7,133.1 860.8,134.0" fill="#00A0FF"/><line x1="873.7" y1="121.6" x2="873.7" y2="133.1" stroke="#000" stroke-opacity="0.4" stroke-width="1"/><polygon points="873.7,121.6 886.6,120.3 886.6,131.8 873.7,133.1" fill="#00FFFF"/><line x1="886.6" y1="120.3" x2="886.6" y2="131.8" stroke="#000" stroke-opacity="0.4" stroke-width="1"/><polygon points="886.6,120.3 899.5,118.6 899.5,130.1 886.6,131.8" fill="#00E000"/><line x1="899.5" y1="118.6" x2="899.5" y2="130.1" stroke="#000" stroke-opacity="0.4" stroke-width="1"/><polygon points="899.5,118.6 912.4,116.6 912.4,128.1 899.5,130.1" fill="#A8F000"/><line x1="912.4" y1="116.6" x2="912.4" y2="128.1" stroke="#000" stroke-opacity="0.4" stroke-width="1"/><polygon points="912.4,116.6 925.2,114.4 925.2,125.9 912.4,128.1" fill="#FFA800"/><line x1="925.2" y1="114.4" x2="925.2" y2="125.9" stroke="#000" stroke-opacity="0.4" stroke-width="1"/><polygon points="925.2,114.4 938.1,112.0 938.1,123.5 925.2,125.9" fill="#FF4000"/><line x1="938.1" y1="112.0" x2="938.1" y2="123.5" stroke="#000" stroke-opacity="0.4" stroke-width="1"/><polygon points="938.1,112.0 951.0,109.5 951.0,121.0 938.1,123.5" fill="#E0007A"/><line x1="951.0" y1="109.5" x2="951.0" y2="121.0" stroke="#000" stroke-opacity="0.4" stroke-width="1"/><polyline points="732.0,109.5 737.5,110.6 743.0,111.6 748.4,112.7 753.9,113.7 759.4,114.7 764.9,115.6 770.3,116.6 775.8,117.4 781.3,118.3 786.8,119.0 792.2,119.8 797.7,120.4 803.2,121.0 808.6,121.5 814.1,122.0 819.6,122.3 825.1,122.6 830.5,122.8 836.0,123.0 841.5,123.0 847.0,123.0 852.5,122.8 857.9,122.6 863.4,122.3 868.9,122.0 874.4,121.5 879.8,121.0 885.3,120.4 890.8,119.8 896.2,119.0 901.7,118.3 907.2,117.4 912.7,116.6 918.1,115.6 923.6,114.7 929.1,113.7 934.6,112.7 940.0,111.6 945.5,110.6 951.0,109.5" fill="none" stroke="#000" stroke-opacity="0.6" stroke-width="1.2"/><line x1="35.5" y1="120" x2="35.5" y2="151" stroke="#D8D080" stroke-width="1"/><rect x="28.5" y="151.5" width="13" height="7" fill="none" stroke="#10C010" stroke-width="1"/><line x1="35.5" y1="151" x2="35.5" y2="158" stroke="#10C010" stroke-width="1"/><line x1="274.5" y1="120" x2="274.5" y2="151" stroke="#D8D080" stroke-width="1"/><rect x="267.5" y="151.5" width="13" height="7" fill="none" stroke="#10C010" stroke-width="1"/><line x1="274.5" y1="151" x2="274.5" y2="158" stroke="#10C010" stroke-width="1"/><line x1="512.5" y1="120" x2="512.5" y2="151" stroke="#D8D080" stroke-width="1"/><rect x="505.5" y="151.5" width="13" height="7" fill="none" stroke="#10C010" stroke-width="1"/><line x1="512.5" y1="151" x2="512.5" y2="158" stroke="#10C010" stroke-width="1"/><line x1="732.5" y1="120" x2="732.5" y2="151" stroke="#D8D080" stroke-width="1"/><rect x="725.5" y="151.5" width="13" height="7" fill="none" stroke="#10C010" stroke-width="1"/><line x1="732.5" y1="151" x2="732.5" y2="158" stroke="#10C010" stroke-width="1"/><line x1="951.5" y1="120" x2="951.5" y2="151" stroke="#D8D080" stroke-width="1"/><rect x="944.5" y="151.5" width="13" height="7" fill="none" stroke="#10C010" stroke-width="1"/><line x1="951.5" y1="151" x2="951.5" y2="158" stroke="#10C010" stroke-width="1"/></svg></div><div class="a" style="left:28px;top:702px;width:66px;height:16px;background:#C800C8"></div><div class="a" style="left:94px;top:702px;width:66px;height:16px;background:#E0007A"></div><div class="a" style="left:160px;top:702px;width:66px;height:16px;background:#FF0000"></div><div class="a" style="left:226px;top:702px;width:66px;height:16px;background:#FF4000"></div><div class="a" style="left:292px;top:702px;width:66px;height:16px;background:#FF8000"></div><div class="a" style="left:358px;top:702px;width:66px;height:16px;background:#FFA800"></div><div class="a" style="left:424px;top:702px;width:66px;height:16px;background:#FFD000"></div><div class="a" style="left:490px;top:702px;width:66px;height:16px;background:#FFFF00"></div><div class="a" style="left:556px;top:702px;width:66px;height:16px;background:#A8F000"></div><div class="a" style="left:622px;top:702px;width:66px;height:16px;background:#00E000"></div><div class="a" style="left:688px;top:702px;width:66px;height:16px;background:#00F080"></div><div class="a" style="left:754px;top:702px;width:66px;height:16px;background:#00FFFF"></div><div class="a" style="left:820px;top:702px;width:66px;height:16px;background:#00A0FF"></div><div class="a" style="left:886px;top:702px;width:66px;height:16px;background:#0040FF"></div><div class="a" style="left:952px;top:702px;width:67px;height:16px;background:#0000E0"></div><div class="t" style="left:64px;top:704px;width:60px;text-align:center;font-size:12px;font-weight:bold;color:rgba(20,0,20,0.8)">1.5</div><div class="t" style="left:130px;top:704px;width:60px;text-align:center;font-size:12px;font-weight:bold;color:rgba(20,0,20,0.8)">3.0</div><div class="t" style="left:196px;top:704px;width:60px;text-align:center;font-size:12px;font-weight:bold;color:rgba(20,0,20,0.8)">4.5</div><div class="t" style="left:262px;top:704px;width:60px;text-align:center;font-size:12px;font-weight:bold;color:rgba(20,0,20,0.8)">6.0</div><div class="t" style="left:328px;top:704px;width:60px;text-align:center;font-size:12px;font-weight:bold;color:rgba(20,0,20,0.8)">7.5</div><div class="t" style="left:394px;top:704px;width:60px;text-align:center;font-size:12px;font-weight:bold;color:rgba(20,0,20,0.8)">9.0</div><div class="t" style="left:460px;top:704px;width:60px;text-align:center;font-size:12px;font-weight:bold;color:rgba(20,0,20,0.8)">10.5</div><div class="t" style="left:526px;top:704px;width:60px;text-align:center;font-size:12px;font-weight:bold;color:rgba(20,0,20,0.8)">12.0</div><div class="t" style="left:592px;top:704px;width:60px;text-align:center;font-size:12px;font-weight:bold;color:rgba(20,0,20,0.8)">13.5</div><div class="t" style="left:658px;top:704px;width:60px;text-align:center;font-size:12px;font-weight:bold;color:rgba(20,0,20,0.8)">15.0</div><div class="t" style="left:724px;top:704px;width:60px;text-align:center;font-size:12px;font-weight:bold;color:rgba(20,0,20,0.8)">16.5</div><div class="t" style="left:790px;top:704px;width:60px;text-align:center;font-size:12px;font-weight:bold;color:rgba(20,0,20,0.8)">18.0</div><div class="t" style="left:856px;top:704px;width:60px;text-align:center;font-size:12px;font-weight:bold;color:rgba(20,0,20,0.8)">19.5</div><div class="t" style="left:922px;top:704px;width:60px;text-align:center;font-size:12px;font-weight:bold;color:rgba(20,0,20,0.8)">21.0</div><div class="t" style="left:977px;top:704px;width:60px;text-align:center;font-size:12px;font-weight:bold;color:rgba(20,0,20,0.8)">E-3</div>
<div class="btn3" style="left:959px;top:411px;width:17px;height:17px;background:linear-gradient(135deg,#7C9CF0,#5478DC)"></div>
<div class="a" style="left:963px;top:421px;width:6px;height:3px;background:#fff"></div>
<div class="btn3" style="left:979px;top:411px;width:17px;height:17px;background:linear-gradient(135deg,#7C9CF0,#5478DC)"></div>
<div class="a" style="left:983px;top:415px;width:9px;height:9px;border:1px solid #fff;border-top-width:3px"></div>
<div class="btn3" style="left:999px;top:411px;width:17px;height:17px;background:#B4707E"></div>
<svg class="a" style="left:999px;top:411px" width="17" height="17"><path d="M4.5 4.5L12.5 12.5M12.5 4.5L4.5 12.5" stroke="#fff" stroke-width="2"/></svg>
<div class="a" style="left:435px;top:3px;width:524px;height:532px;background:linear-gradient(90deg,#0A46D8 0,#0A46D8 3px,#0030C0 6px,#0028B0 calc(100% - 3px),#001A98 100%);border-radius:7px 7px 0 0;border:1px solid #0020A8;border-top-color:#2D7BFF;border-bottom-color:#001070"></div><div class="a" style="left:436px;top:532px;width:522px;height:2px;background:#0024B8"></div><div class="a dttl" style="left:436px;top:4px;width:522px;height:24px;border-radius:6px 6px 0 0"></div><div class="t" style="left:440px;top:11px;font-size:12px;letter-spacing:-0.3px;font-weight:bold;color:#fff;text-shadow:1px 1px #0A1E80">Diagrams for Frame Object 28&nbsp; (SLAB)</div><div class="a" style="left:438px;top:28px;width:518px;height:504px;background:#ECE9D8;border-left:1px solid #fff;border-top:1px solid #fff"></div><div class="a" style="left:955px;top:28px;width:1px;height:504px;background:#D8DEF0"></div><div class="a grp" style="left:441px;top:34px;width:513px;height:493px"></div><div class="a grp" style="left:451px;top:44px;width:240px;height:96px"></div><div class="t" style="left:463px;top:58px;font-size:11px;font-weight:bold;letter-spacing:-0.4px">Case</div><div class="a cmb" style="left:495px;top:53px;width:184px;height:19px"></div><div class="t" style="left:499px;top:58px;font-size:10px;letter-spacing:-0.27px;">USE4COMPARISION</div><div class="a cbtn" style="left:661px;top:55px;width:16px;height:15px"></div><svg class="a" style="left:665.0px;top:60.5px" width="8" height="5"><path d="M0.5 0.5H7.5L4 4.5Z" fill="#000"/></svg><div class="t" style="left:463px;top:80px;font-size:10px;letter-spacing:-0.27px;">Items</div><div class="a cmb" style="left:495px;top:75px;width:102px;height:18px"></div><div class="t" style="left:499px;top:80px;font-size:10px;letter-spacing:-0.27px;">Major (V2 and M3)</div><div class="a cbtn" style="left:579px;top:77px;width:16px;height:14px"></div><svg class="a" style="left:583.0px;top:82.0px" width="8" height="5"><path d="M0.5 0.5H7.5L4 4.5Z" fill="#000"/></svg><div class="a cmb" style="left:600px;top:75px;width:80px;height:18px"></div><div class="t" style="left:604px;top:80px;font-size:10px;letter-spacing:-0.27px;">Single valued</div><div class="a cbtn" style="left:662px;top:77px;width:16px;height:14px"></div><svg class="a" style="left:666.0px;top:82.0px" width="8" height="5"><path d="M0.5 0.5H7.5L4 4.5Z" fill="#000"/></svg><div class="a grp" style="left:698px;top:45px;width:133px;height:96px"></div><div class="t" style="left:703px;top:42px;padding:0 2px;background:#ECE9D8;font-size:10px;letter-spacing:-0.27px">End Length Offset (Location)</div><div class="a pbtn" style="left:705px;top:57px;width:36px;height:18px;line-height:17px;text-align:center;font-size:10px;letter-spacing:-0.27px">I-End:</div><div class="a pbtn" style="left:705px;top:97px;width:36px;height:18px;line-height:17px;text-align:center;font-size:10px;letter-spacing:-0.27px">J-End:</div><div class="t" style="left:743px;top:62px;font-size:10px;letter-spacing:-0.27px;">Jt:&nbsp; 2</div><div class="t" style="left:743px;top:74px;font-size:10px;letter-spacing:-0.27px;">1.200000 m</div><div class="t" style="left:743px;top:88px;font-size:10px;letter-spacing:-0.27px;">(1.20000 m)</div><div class="t" style="left:743px;top:102px;font-size:10px;letter-spacing:-0.27px;">Jt:&nbsp; 4</div><div class="t" style="left:743px;top:114px;font-size:10px;letter-spacing:-0.27px;">0.300000 m</div><div class="t" style="left:743px;top:128px;font-size:10px;letter-spacing:-0.27px;">(18.60000 m)</div><div class="a grp" style="left:838px;top:45px;width:105px;height:52px"></div><div class="t" style="left:844px;top:42px;padding:0 2px;background:#ECE9D8;font-size:10px;letter-spacing:-0.27px">Display Options</div><div class="a rad" style="left:848px;top:58px;width:12px;height:12px"></div><div class="a" style="left:852px;top:62px;width:4px;height:4px;border-radius:2px;background:#000"></div><div class="t" style="left:864px;top:59px;font-size:10px;letter-spacing:-0.27px;">Scroll for Values</div><div class="a rad" style="left:848px;top:76px;width:12px;height:12px"></div><div class="t" style="left:864px;top:77px;font-size:10px;letter-spacing:-0.27px;">Show Max</div><div class="a grp" style="left:838px;top:107px;width:105px;height:34px"></div><div class="t" style="left:844px;top:104px;padding:0 2px;background:#ECE9D8;font-size:10px;letter-spacing:-0.27px">Location</div><div class="a edit" style="left:848px;top:119px;width:61px;height:16px"></div><div class="t" style="left:852px;top:122px;font-size:10px;letter-spacing:-0.27px;">5.35318</div><div class="t" style="left:917px;top:123px;font-size:10px;letter-spacing:-0.27px;">m</div><div class="a grp" style="left:451px;top:150px;width:492px;height:72px"></div><div class="t" style="left:458px;top:147px;padding:0 2px;background:#ECE9D8;font-size:10px;letter-spacing:-0.27px">Equivalent Loads - Free Body Diagram&nbsp; (Concentrated Forces in KN, Concentrated Moments in KN-m)</div><div class="t" style="left:829px;top:160px;font-size:11px;font-weight:bold;letter-spacing:-0.2px">Dist Load (2-dir)</div><div class="t" style="left:829px;top:175px;font-size:10px;letter-spacing:-0.27px;">33.86 KN/m</div><div class="t" style="left:829px;top:189px;font-size:10px;letter-spacing:-0.27px;">at 5.35318 m</div><div class="t" style="left:829px;top:203px;font-size:10px;letter-spacing:-0.27px;">Positive in -2 direction</div><div class="a grp" style="left:451px;top:232px;width:492px;height:73px"></div><div class="t" style="left:458px;top:229px;padding:0 2px;background:#ECE9D8;font-size:10px;letter-spacing:-0.27px">Resultant Shear</div><div class="t" style="left:829px;top:242px;font-size:11px;font-weight:bold;letter-spacing:-0.2px">Shear V2</div><div class="t" style="left:829px;top:257px;font-size:10px;letter-spacing:-0.27px;">-106.704 KN</div><div class="t" style="left:829px;top:271px;font-size:10px;letter-spacing:-0.27px;">at 5.35318 m</div><div class="a grp" style="left:451px;top:314px;width:492px;height:73px"></div><div class="t" style="left:458px;top:311px;padding:0 2px;background:#ECE9D8;font-size:10px;letter-spacing:-0.27px">Resultant Moment</div><div class="t" style="left:829px;top:324px;font-size:11px;font-weight:bold;letter-spacing:-0.2px">Moment M3</div><div class="t" style="left:829px;top:339px;font-size:10px;letter-spacing:-0.27px;">479.0702 KN-m</div><div class="t" style="left:829px;top:353px;font-size:10px;letter-spacing:-0.27px;">at 5.35318 m</div><div class="a grp" style="left:451px;top:397px;width:492px;height:90px"></div><div class="t" style="left:458px;top:394px;padding:0 2px;background:#ECE9D8;font-size:10px;letter-spacing:-0.27px">Deflections</div><div class="t" style="left:829px;top:407px;font-size:11px;font-weight:bold;letter-spacing:-0.2px">Deflection (2-dir)</div><div class="t" style="left:829px;top:422px;font-size:10px;letter-spacing:-0.27px;">0.013053 m</div><div class="t" style="left:829px;top:436px;font-size:10px;letter-spacing:-0.27px;">at 5.35318 m</div><div class="t" style="left:829px;top:450px;font-size:10px;letter-spacing:-0.27px;">Positive in -2 direction</div><div class="a cnv" style="left:463px;top:163px;width:353px;height:53px"><svg class="a" style="left:0;top:0" width="353" height="53"><rect x="34" y="3.5" width="286" height="23" fill="#FF8000"/><line x1="34" y1="26.5" x2="320" y2="26.5" stroke="#C8D020" stroke-width="1.5"/><line x1="115" y1="4" x2="115" y2="50" stroke="#10B010" stroke-width="1.3"/><text transform="translate(4,12) scale(1,1.5)" fill="#F4F450" font-family="Liberation Mono" font-size="8.4">576.32</text><text transform="translate(4,50) scale(1,1.5)" fill="#F4F450" font-family="Liberation Mono" font-size="8.4">287.96</text><text transform="translate(315,12) scale(1,1.5)" fill="#F4F450" font-family="Liberation Mono" font-size="8.4">1081.35</text><text transform="translate(318,50) scale(1,1.5)" fill="#F4F450" font-family="Liberation Mono" font-size="8.4">351.98</text><path d="M23 17 Q11 19 13 29 Q15 37 24 37 M24 37 l-5 -1 M24 37 l-3 -4" fill="none" stroke="#F0F040" stroke-width="1.7"/><path d="M34 27 V 42 M34 27 l-3 5 M34 27 l3 5" fill="none" stroke="#F0F040" stroke-width="1.4"/><path d="M330 17 Q343 19 341 29 Q339 38 330 38 M330 38 l5 -1 M330 38 l3 -4" fill="none" stroke="#F0F040" stroke-width="1.7"/><path d="M320 27 V 42 M320 27 l-3 5 M320 27 l3 5" fill="none" stroke="#F0F040" stroke-width="1.4"/></svg></div><div class="a cnv" style="left:463px;top:245px;width:353px;height:54px"><svg class="a" style="left:0;top:0" width="353" height="54"><polygon points="34,27.75 157,27.75 34,45.75" fill="#FF0000"/><polygon points="157,27.75 320,27.75 320,5.75" fill="#FFFF00"/><line x1="34" y1="27.75" x2="320" y2="27.75" stroke="#10A010" stroke-width="1.3"/><line x1="115" y1="6" x2="115" y2="50" stroke="#10B010" stroke-width="1.3"/></svg></div><div class="a cnv" style="left:463px;top:327px;width:353px;height:53px"><svg class="a" style="left:0;top:0" width="353" height="53"><polygon points="34,26.5 34.0,26.5 36.9,26.5 39.7,26.5 42.6,26.5 45.4,26.5 48.3,26.5 51.2,26.5 54.0,26.5 56.9,26.5 59.7,26.5 62.6,26.5 65.5,27.2 68.3,27.9 71.2,28.6 74.0,29.2 76.9,29.9 79.8,30.5 82.6,31.1 85.5,31.7 88.3,32.2 91.2,32.8 94.1,33.3 96.9,33.8 99.8,34.3 102.6,34.7 105.5,35.1 108.4,35.6 111.2,35.9 114.1,36.3 116.9,36.7 119.8,37.0 122.7,37.3 125.5,37.6 128.4,37.8 131.2,38.1 134.1,38.3 137.0,38.5 139.8,38.7 142.7,38.8 145.5,38.9 148.4,39.0 151.3,39.1 154.1,39.2 157.0,39.2 159.8,39.3 162.7,39.3 165.6,39.3 168.4,39.2 171.3,39.2 174.1,39.1 177.0,39.0 179.9,38.8 182.7,38.7 185.6,38.5 188.4,38.3 191.3,38.1 194.2,37.9 197.0,37.6 199.9,37.4 202.7,37.1 205.6,36.7 208.5,36.4 211.3,36.0 214.2,35.7 217.0,35.3 219.9,34.8 222.8,34.4 225.6,33.9 228.5,33.4 231.3,32.9 234.2,32.4 237.1,31.8 239.9,31.3 242.8,30.7 245.6,30.0 248.5,29.4 251.4,28.7 254.2,28.1 257.1,27.4 259.9,26.6 262.8,26.5 265.7,26.5 268.5,26.5 271.4,26.5 274.2,26.5 277.1,26.5 280.0,26.5 282.8,26.5 285.7,26.5 288.5,26.5 291.4,26.5 294.3,26.5 297.1,26.5 300.0,26.5 302.8,26.5 305.7,26.5 308.6,26.5 311.4,26.5 314.3,26.5 317.1,26.5 320.0,26.5 320,26.5" fill="#FFFF00"/><polygon points="34,26.5 34.0,17.2 36.9,18.2 39.7,19.2 42.6,20.2 45.4,21.2 48.3,22.1 51.2,23.0 54.0,23.9 56.9,24.8 59.7,25.6 62.6,26.4 65.5,26.5 68.3,26.5 71.2,26.5 74.0,26.5 76.9,26.5 79.8,26.5 82.6,26.5 85.5,26.5 88.3,26.5 91.2,26.5 94.1,26.5 96.9,26.5 99.8,26.5 102.6,26.5 105.5,26.5 108.4,26.5 111.2,26.5 114.1,26.5 116.9,26.5 119.8,26.5 122.7,26.5 125.5,26.5 128.4,26.5 131.2,26.5 134.1,26.5 137.0,26.5 139.8,26.5 142.7,26.5 145.5,26.5 148.4,26.5 151.3,26.5 154.1,26.5 157.0,26.5 159.8,26.5 162.7,26.5 165.6,26.5 168.4,26.5 171.3,26.5 174.1,26.5 177.0,26.5 179.9,26.5 182.7,26.5 185.6,26.5 188.4,26.5 191.3,26.5 194.2,26.5 197.0,26.5 199.9,26.5 202.7,26.5 205.6,26.5 208.5,26.5 211.3,26.5 214.2,26.5 217.0,26.5 219.9,26.5 222.8,26.5 225.6,26.5 228.5,26.5 231.3,26.5 234.2,26.5 237.1,26.5 239.9,26.5 242.8,26.5 245.6,26.5 248.5,26.5 251.4,26.5 254.2,26.5 257.1,26.5 259.9,26.5 262.8,25.8 265.7,25.0 268.5,24.1 271.4,23.2 274.2,22.3 277.1,21.4 280.0,20.5 282.8,19.5 285.7,18.5 288.5,17.5 291.4,16.4 294.3,15.4 297.1,14.3 300.0,13.2 302.8,12.0 305.7,10.9 308.6,9.7 311.4,8.5 314.3,7.2 317.1,6.0 320.0,4.7 320,26.5" fill="#FF0000"/><line x1="34" y1="26.5" x2="320" y2="26.5" stroke="#10A010" stroke-width="1.3"/><line x1="115" y1="6" x2="115" y2="50" stroke="#10B010" stroke-width="1.3"/></svg></div><div class="a cnv" style="left:463px;top:410px;width:353px;height:53px"><svg class="a" style="left:0;top:0" width="353" height="53"><line x1="34" y1="27" x2="320" y2="27" stroke="#10A010" stroke-width="1.5"/><polyline points="34.0,27.0 38.8,28.2 43.5,29.4 48.3,30.5 53.1,31.6 57.8,32.7 62.6,33.8 67.4,34.8 72.1,35.8 76.9,36.7 81.7,37.6 86.4,38.5 91.2,39.3 96.0,40.1 100.7,40.8 105.5,41.5 110.3,42.2 115.0,42.8 119.8,43.3 124.6,43.9 129.3,44.3 134.1,44.8 138.9,45.1 143.6,45.5 148.4,45.8 153.2,46.0 157.9,46.2 162.7,46.4 167.5,46.5 172.2,46.5 177.0,46.5 181.8,46.5 186.5,46.5 191.3,46.4 196.1,46.2 200.8,46.0 205.6,45.8 210.4,45.5 215.1,45.1 219.9,44.8 224.7,44.3 229.4,43.9 234.2,43.3 239.0,42.8 243.7,42.2 248.5,41.5 253.3,40.8 258.0,40.1 262.8,39.3 267.6,38.5 272.3,37.6 277.1,36.7 281.9,35.8 286.6,34.8 291.4,33.8 296.2,32.7 300.9,31.6 305.7,30.5 310.5,29.4 315.2,28.2 320.0,27.0" fill="none" stroke="#E01010" stroke-width="1.5"/><line x1="115" y1="4" x2="115" y2="50" stroke="#10B010" stroke-width="1.3"/></svg></div><div class="a rad" style="left:462px;top:471px;width:12px;height:12px"></div><div class="t" style="left:478px;top:473px;font-size:10px;letter-spacing:-0.27px;">Absolute</div><div class="a rad" style="left:546px;top:471px;width:12px;height:12px"></div><div class="t" style="left:561px;top:473px;font-size:10px;letter-spacing:-0.27px;">Relative to Beam Minimum</div><div class="a rad" style="left:700px;top:471px;width:12px;height:12px"></div><div class="a" style="left:704px;top:475px;width:4px;height:4px;border-radius:2px;background:#000"></div><div class="t" style="left:716px;top:473px;font-size:10px;letter-spacing:-0.27px;">Relative to Beam Ends</div><div class="a pbtn" style="left:455px;top:499px;width:95px;height:19px;line-height:18px;text-align:center;font-size:10px;letter-spacing:-0.27px">Reset to Initial Units</div><div class="a pbtn def" style="left:647px;top:499px;width:96px;height:19px;line-height:18px;text-align:center;font-size:10px;letter-spacing:-0.27px">Done</div><div class="t" style="left:839px;top:504px;font-size:10px;letter-spacing:-0.27px;">Units</div><div class="a cmb" style="left:867px;top:499px;width:71px;height:18px"></div><div class="t" style="left:871px;top:504px;font-size:10px;letter-spacing:-0.27px;">KN, m, C</div><div class="a cbtn" style="left:920px;top:501px;width:16px;height:14px"></div><svg class="a" style="left:924.0px;top:506.0px" width="8" height="5"><path d="M0.5 0.5H7.5L4 4.5Z" fill="#000"/></svg><!-- status bar -->
<div class="a" style="left:0;top:721px;width:1024px;height:1px;background:#FFFFFF"></div>
<div class="a" style="left:0;top:722px;width:1024px;height:18px;background:#C4C4C4"></div>
<div class="t" style="left:11px;top:724px;font-size:11px;letter-spacing:-0.4px">Ready</div>
<div class="a sbtn" style="left:717px;top:723px;width:20px;height:17px"></div>
<svg class="a" style="left:719px;top:725px" width="16" height="12"><path d="M1 6L6 1V4H14V8H6V11Z" fill="#40C8C8" stroke="#104848"/></svg>
<div class="a sbtn" style="left:738px;top:723px;width:20px;height:17px"></div>
<svg class="a" style="left:740px;top:725px" width="16" height="12"><path d="M15 6L10 1V4H2V8H10V11Z" fill="#40C8C8" stroke="#104848"/></svg>
<div class="a cmb" style="left:759px;top:723px;width:70px;height:17px"></div>
<div class="t" style="left:762px;top:727px;font-size:10.5px;letter-spacing:-0.6px">GLOBAL</div>
<div class="a cbtn" style="left:811px;top:725px;width:16px;height:13px"></div>
<svg class="a" style="left:815px;top:729px" width="8" height="5"><path d="M0.5 0.5H7.5L4 4.5Z" fill="#000"/></svg>
<div class="a cmb" style="left:831px;top:723px;width:71px;height:17px"></div>
<div class="t" style="left:835px;top:727px;font-size:10.5px;letter-spacing:-0.2px">KN, m, C</div>
<div class="a cbtn" style="left:884px;top:725px;width:16px;height:13px"></div>
<svg class="a" style="left:888px;top:729px" width="8" height="5"><path d="M0.5 0.5H7.5L4 4.5Z" fill="#000"/></svg>
<!-- taskbar -->
<div class="a" style="left:0;top:740px;width:1024px;height:28px;background:linear-gradient(#3F7BEA 0,#2D63DC 2px,#2A5CD8 40%,#2656D2 80%,#1F4BBE 100%)"></div>
<div class="a" style="left:0;top:740px;width:86px;height:28px;border-radius:0 10px 10px 0;background:linear-gradient(#5CB85C 0,#3FA23F 3px,#379737 50%,#2E8A2E 85%,#2B7A2B 100%)"></div>
<svg class="a" style="left:9px;top:746px" width="17" height="17"><path d="M1 3Q4 1 8 3L7 8Q4 6 1 8Z" fill="#F06A20"/><path d="M9 3Q12 5 16 3L15 8Q12 10 8 8Z" fill="#60C030"/><path d="M1 9Q4 7 7 9L6 14Q3 12 0 14Z" fill="#3080F0"/><path d="M8 9Q11 11 15 9L14 14Q11 16 7 14Z" fill="#F8C800"/></svg>
<div class="t" style="left:30px;top:747px;font-size:16px;font-weight:bold;font-style:italic;color:#fff;text-shadow:1px 1px 1px #1A4A1A">start</div>
<!-- quick launch -->
<svg class="a" style="left:97px;top:746px" width="16" height="16"><path d="M12 4Q8 0 4 3Q0 7 3 12Q7 16 12 12" fill="none" stroke="#1A48B0" stroke-width="4.5"/><path d="M12 4Q8 0 4 3Q0 7 3 12Q7 16 12 12" fill="none" stroke="#E8F4FF" stroke-width="2.5"/><path d="M6 8H13" stroke="#1A48B0" stroke-width="2"/><path d="M13 5L15 8L13 10" fill="#F06060"/></svg>
<svg class="a" style="left:118px;top:746px" width="14" height="16"><rect x="0" y="1" width="7" height="7" fill="#E8E020"/><rect x="7" y="1" width="7" height="7" fill="#101010"/><rect x="0" y="8" width="7" height="7" fill="#20A020"/><rect x="7" y="8" width="7" height="7" fill="#E02020"/></svg>
<svg class="a" style="left:138px;top:746px" width="15" height="16"><rect x="0" y="0" width="15" height="16" fill="#102030"/><path d="M1 14L6 3L10 12L14 5" fill="none" stroke="#E02040" stroke-width="1.3"/><path d="M1 6L14 12" stroke="#40C0E0"/></svg>
<svg class="a" style="left:157px;top:746px" width="16" height="16"><path d="M13 9H5Q5 13 9 13Q11 13 12 11" fill="none" stroke="#2A8AEA" stroke-width="2.2"/><path d="M4 8Q4 3 8.5 3Q13 3 13 8" fill="none" stroke="#2A8AEA" stroke-width="2.2"/><path d="M1 13Q6 -2 16 3" fill="none" stroke="#F0C040" stroke-width="1.2"/></svg>
<svg class="a" style="left:178px;top:746px" width="15" height="16"><rect x="0.5" y="0.5" width="14" height="15" fill="#F8D890" stroke="#C07020"/><circle cx="7.5" cy="8" r="5" fill="#fff" stroke="#E08020" stroke-width="1.5"/><path d="M7.5 5V8H10" stroke="#804000" fill="none"/></svg>
<svg class="a" style="left:199px;top:746px" width="15" height="16"><rect x="0" y="0" width="15" height="16" fill="#1E3A9A"/><rect x="2" y="3" width="11" height="10" fill="#fff"/><path d="M3 4L5 12L7.5 6L10 12L12 4" fill="none" stroke="#1E3A9A" stroke-width="1.6"/></svg>
<svg class="a" style="left:220px;top:746px" width="15" height="16"><rect x="0" y="0" width="15" height="16" fill="#1E7A3A"/><rect x="2" y="3" width="11" height="10" fill="#D8F0D8"/><path d="M3 4L12 12M12 4L3 12" stroke="#1E7A3A" stroke-width="1.8"/></svg>
<svg class="a" style="left:240px;top:746px" width="15" height="16"><path d="M2 5H11M9 2L12 5L9 8M13 11H4M6 8L3 11L6 14" fill="none" stroke="#fff" stroke-width="3.4"/><path d="M2 5H11M9 2L12 5L9 8M13 11H4M6 8L3 11L6 14" fill="none" stroke="#000" stroke-width="1.6"/></svg>
<svg class="a" style="left:262px;top:746px" width="12" height="16"><rect x="0.5" y="0.5" width="11" height="15" rx="1" fill="#B8C8E8" stroke="#6070A0"/><rect x="2" y="2" width="8" height="3" fill="#E0E8F8"/><path d="M2 7H10M2 10H10M2 13H10" stroke="#7080B0" stroke-dasharray="2 1"/></svg>
<svg class="a" style="left:280px;top:746px" width="15" height="16"><rect x="0" y="0" width="15" height="16" rx="3" fill="#fff"/><path d="M3 8H8M9 5V9H12" stroke="#203040" stroke-width="1.6"/></svg>
<!-- task buttons -->
<div class="a" style="left:392px;top:744px;width:141px;height:22px;border-radius:3px;background:#1E4CC0;box-shadow:inset 1px 1px 1px #17389A"></div>
<svg class="a" style="left:402px;top:747px" width="15" height="15"><rect x="0.5" y="0.5" width="14" height="14" fill="#F4C030" stroke="#B03040" stroke-dasharray="2 1"/><path d="M2.5 2.5L12.5 12.5M12.5 2.5L2.5 12.5" stroke="#E02810" stroke-width="3.2"/><path d="M5 5L10 10M10 5L5 10" stroke="#A01808" stroke-width="1.3"/><path d="M2 7.5H13M7.5 2V13" stroke="#F8D050" stroke-width="1"/></svg>
<div class="t" style="left:419px;top:750px;font-size:10.5px;letter-spacing:-0.45px;color:#fff">SAP2000 - windsor8_18</div>
<div class="a" style="left:535px;top:744px;width:140px;height:22px;border-radius:3px;background:linear-gradient(#4A8CF4,#3A7CEC 30%,#3678EA);box-shadow:inset 0 1px 0 #6EA4FF"></div>
<svg class="a" style="left:543px;top:749px" width="16" height="11"><path d="M1 7H10M1 4H7M8 2L11 5V9H15" fill="none" stroke="#fff" stroke-width="1.5"/></svg>
<div class="t" style="left:560px;top:750px;font-size:11px;letter-spacing:-0.4px;color:#fff">ADAPT-PT - [C:\IIT\P...</div>
<!-- tray -->
<svg class="a" style="left:894px;top:748px" width="16" height="12"><rect x="0.5" y="2.5" width="15" height="9" rx="2" fill="#E8ECF8" stroke="#203070"/><path d="M3 5H13M3 7H13M3 9H13" stroke="#707890" stroke-dasharray="1 1"/><path d="M8 2V0" stroke="#203070"/></svg>
<div class="a" style="left:925px;top:740px;width:99px;height:28px;background:linear-gradient(#1AA2F0 0,#0F93E8 3px,#0E8CE2 50%,#0C84DA 100%);border-left:1px solid #1A4AA8"></div>
<div class="a" style="left:918px;top:747px;width:15px;height:15px;border-radius:50%;background:radial-gradient(circle at 40% 35%,#8EC8FF,#2A78E8);border:1px solid #1A5AC8"></div>
<svg class="a" style="left:921px;top:750px" width="9" height="9"><path d="M6 1L2.5 4.5L6 8" fill="none" stroke="#fff" stroke-width="2"/></svg>
<svg class="a" style="left:935px;top:746px" width="15" height="16"><rect x="0" y="0" width="15" height="16" fill="#10206A"/><path d="M7.5 2L14 14H1Z" fill="#F8E020" stroke="#000" stroke-width="0.8"/><path d="M7.5 6V10M7.5 11.5V13" stroke="#000" stroke-width="1.6"/></svg>
<svg class="a" style="left:950px;top:747px" width="17" height="13"><path d="M1 12L7 1H16L13 12Z" fill="#D03040"/><text x="3" y="11" font-family="Liberation Sans" font-size="10" font-weight="bold" font-style="italic" fill="#fff">ATI</text></svg>
<div class="t" style="left:971px;top:750px;font-size:11px;letter-spacing:-0.2px;color:#fff">11:24 AM</div>

</body></html>
